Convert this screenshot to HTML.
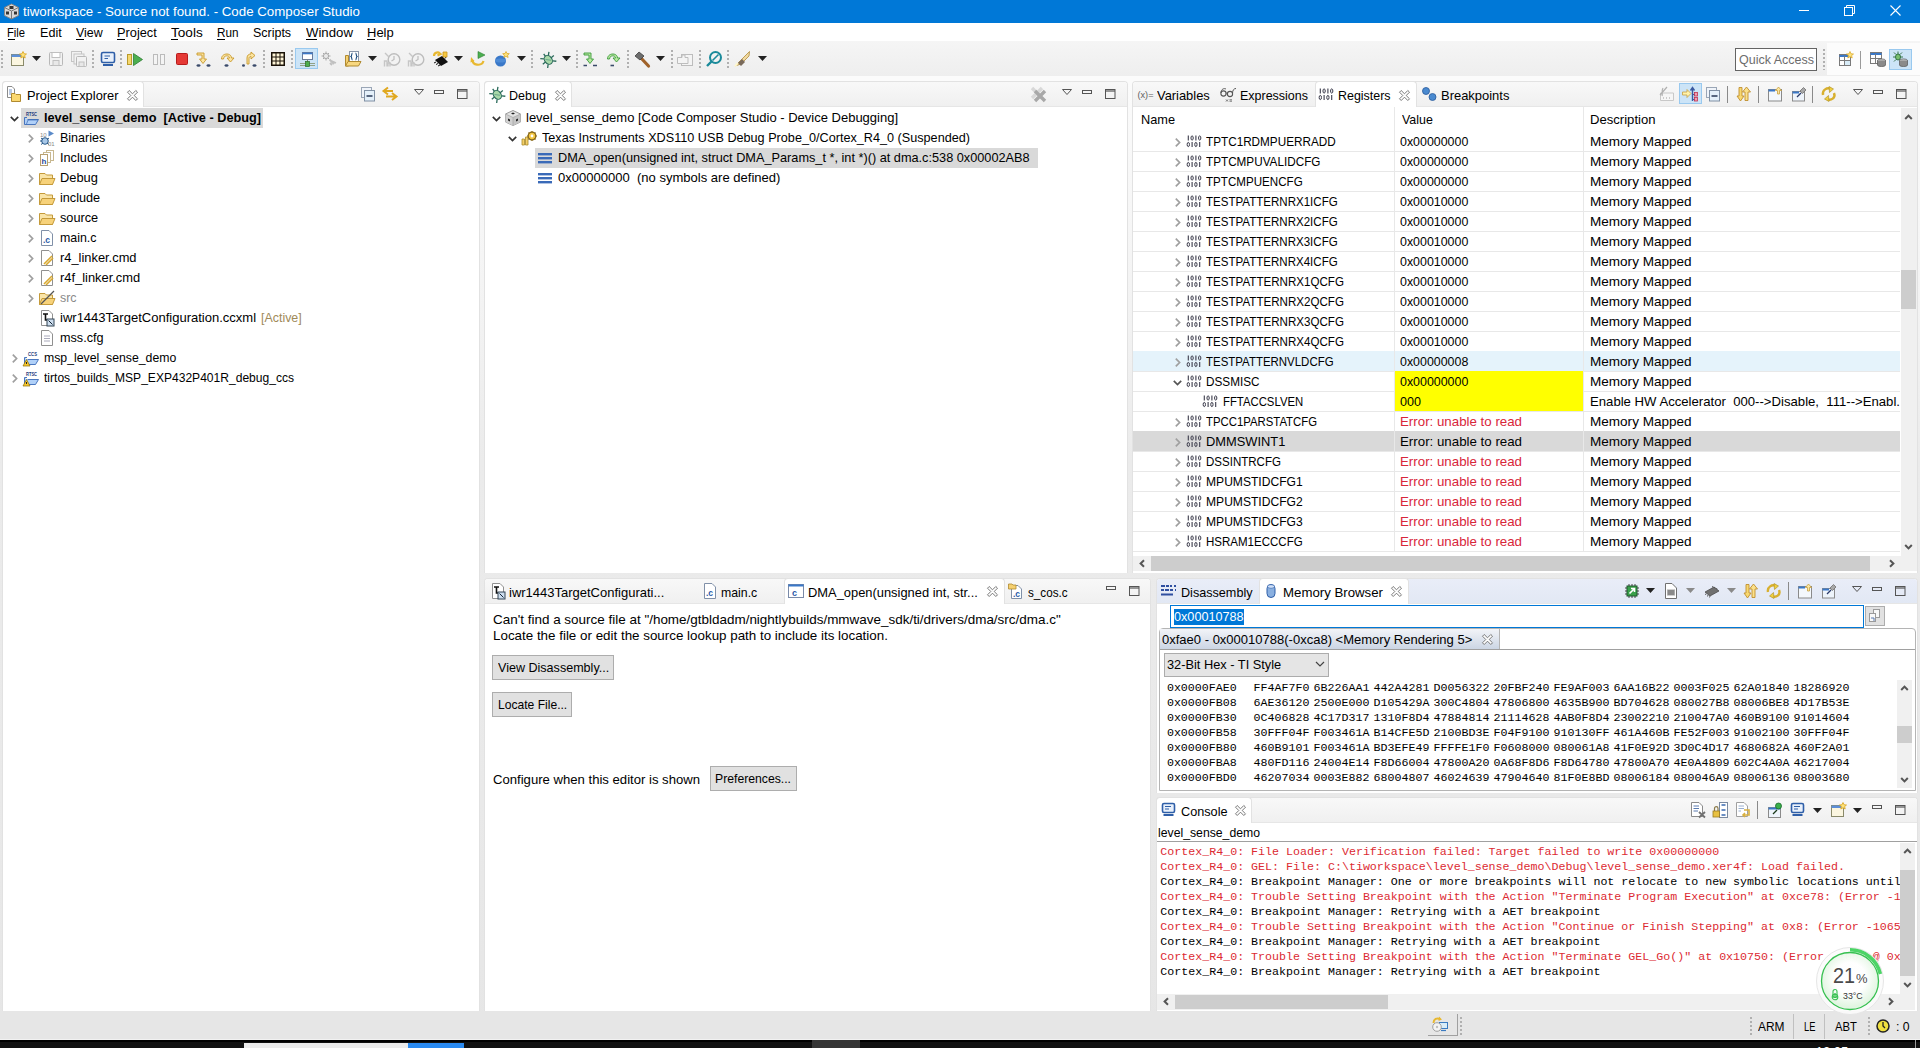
<!DOCTYPE html><html><head><meta charset="utf-8"><style>
*{margin:0;padding:0;box-sizing:border-box}
html,body{width:1920px;height:1048px;overflow:hidden;background:linear-gradient(to bottom,#fbfbfb 0px,#fbfbfb 81px,#f6f6f6 230px,#f2f2f2 330px,#ebebeb 460px,#e9e9e9 800px,#e6e6e6 1040px);font-family:"Liberation Sans",sans-serif;font-size:13px;color:#000}
.a{position:absolute}
.t{position:absolute;white-space:pre;line-height:15px;font-size:13px}
.m{position:absolute;white-space:pre;line-height:15px;font-family:"Liberation Mono",monospace;font-size:11.65px}
svg{position:absolute;overflow:visible}
</style></head><body><div class="a" style="left:0px;top:0px;width:1920px;height:23px;background:#0078d7;"></div>
<div class="t" style="left:22.9px;top:4.09px;font-size:13.33px;color:#fff;font-weight:normal;transform:scaleX(0.9974);transform-origin:0 0;">tiworkspace - Source not found. - Code Composer Studio</div>
<svg style="left:3px;top:3px" width="17" height="17" viewBox="0 0 17 17"><path d="M8.5 1 L15.5 4.5 L15.5 12.5 L8.5 16 L1.5 12.5 L1.5 4.5Z" fill="#d8d8d8" stroke="#888" stroke-width="1"/><path d="M1.5 4.5 L8.5 8 L15.5 4.5 M8.5 8 V16" stroke="#777" fill="none"/><rect x="6.5" y="3" width="4" height="3" fill="#333"/><rect x="3" y="8.5" width="3" height="3" fill="#333"/><rect x="11" y="8.5" width="3" height="3" fill="#333"/></svg>
<div class="a" style="left:1799px;top:10px;width:10px;height:1px;background:#fff;"></div>
<svg style="left:1844px;top:5px" width="11" height="11" viewBox="0 0 11 11"><rect x="0.5" y="2.5" width="8" height="8" fill="none" stroke="#fff"/><path d="M2.5 2.5 V0.5 H10.5 V8.5 H8.5" fill="none" stroke="#fff"/></svg>
<svg style="left:1890px;top:5px" width="11" height="11" viewBox="0 0 11 11"><path d="M0.5 0.5 L10.5 10.5 M10.5 0.5 L0.5 10.5" stroke="#fff" stroke-width="1.1"/></svg>
<div class="a" style="left:0px;top:23px;width:1920px;height:18px;background:#fff;"></div>
<div class="t" style="left:7.3px;top:25.20px;font-size:13px;color:#000;font-weight:normal;transform:scaleX(0.8641);transform-origin:0 0;">File</div>
<div class="t" style="left:40.2px;top:25.20px;font-size:13px;color:#000;font-weight:normal;transform:scaleX(0.9687);transform-origin:0 0;">Edit</div>
<div class="t" style="left:76px;top:25.20px;font-size:13px;color:#000;font-weight:normal;transform:scaleX(0.9555);transform-origin:0 0;">View</div>
<div class="t" style="left:117px;top:25.20px;font-size:13px;color:#000;font-weight:normal;transform:scaleX(0.9837);transform-origin:0 0;">Project</div>
<div class="t" style="left:170.8px;top:25.20px;font-size:13px;color:#000;font-weight:normal;transform:scaleX(1.0445);transform-origin:0 0;">Tools</div>
<div class="t" style="left:217px;top:25.20px;font-size:13px;color:#000;font-weight:normal;transform:scaleX(0.9015);transform-origin:0 0;">Run</div>
<div class="t" style="left:253px;top:25.20px;font-size:13px;color:#000;font-weight:normal;transform:scaleX(0.9590);transform-origin:0 0;">Scripts</div>
<div class="t" style="left:305.8px;top:25.20px;font-size:13px;color:#000;font-weight:normal;transform:scaleX(1.0143);transform-origin:0 0;">Window</div>
<div class="t" style="left:367px;top:25.20px;font-size:13px;color:#000;font-weight:normal;transform:scaleX(0.9986);transform-origin:0 0;">Help</div>
<div class="a" style="left:7.5px;top:39px;width:7px;height:1px;background:#000;"></div>
<div class="a" style="left:76px;top:39px;width:8px;height:1px;background:#000;"></div>
<div class="a" style="left:117px;top:39px;width:8px;height:1px;background:#000;"></div>
<div class="a" style="left:170.8px;top:39px;width:7px;height:1px;background:#000;"></div>
<div class="a" style="left:217px;top:39px;width:8px;height:1px;background:#000;"></div>
<div class="a" style="left:305.8px;top:39px;width:11px;height:1px;background:#000;"></div>
<div class="a" style="left:367px;top:39px;width:8px;height:1px;background:#000;"></div>
<div class="a" style="left:0px;top:41px;width:1920px;height:35px;background:linear-gradient(#f5f5f5,#eeeeee);"></div>
<div class="a" style="left:0px;top:76px;width:1920px;height:5px;background:#fbfbfb;"></div>
<div class="a" style="left:1px;top:50px;width:2px;height:18px;background:repeating-linear-gradient(to bottom,#b0b0b0 0 2px,transparent 2px 4px)"></div>
<div class="a" style="left:92px;top:50px;width:2px;height:18px;background:repeating-linear-gradient(to bottom,#b0b0b0 0 2px,transparent 2px 4px)"></div>
<div class="a" style="left:120px;top:50px;width:2px;height:18px;background:repeating-linear-gradient(to bottom,#b0b0b0 0 2px,transparent 2px 4px)"></div>
<div class="a" style="left:263px;top:50px;width:2px;height:18px;background:repeating-linear-gradient(to bottom,#b0b0b0 0 2px,transparent 2px 4px)"></div>
<div class="a" style="left:291px;top:50px;width:2px;height:18px;background:repeating-linear-gradient(to bottom,#b0b0b0 0 2px,transparent 2px 4px)"></div>
<div class="a" style="left:531px;top:50px;width:2px;height:18px;background:repeating-linear-gradient(to bottom,#b0b0b0 0 2px,transparent 2px 4px)"></div>
<div class="a" style="left:576px;top:50px;width:2px;height:18px;background:repeating-linear-gradient(to bottom,#b0b0b0 0 2px,transparent 2px 4px)"></div>
<div class="a" style="left:627px;top:50px;width:2px;height:18px;background:repeating-linear-gradient(to bottom,#b0b0b0 0 2px,transparent 2px 4px)"></div>
<div class="a" style="left:671px;top:50px;width:2px;height:18px;background:repeating-linear-gradient(to bottom,#b0b0b0 0 2px,transparent 2px 4px)"></div>
<div class="a" style="left:699px;top:50px;width:2px;height:18px;background:repeating-linear-gradient(to bottom,#b0b0b0 0 2px,transparent 2px 4px)"></div>
<div class="a" style="left:727px;top:50px;width:2px;height:18px;background:repeating-linear-gradient(to bottom,#b0b0b0 0 2px,transparent 2px 4px)"></div>
<svg style="left:10px;top:51px" width="16" height="16" viewBox="0 0 16 16"><rect x="1.5" y="3.5" width="12" height="11" fill="#fbf6e0" stroke="#8a8a6a"/><rect x="1.5" y="3.5" width="12" height="2.5" fill="#5d8fd8"/><path d="M13 0.5 L14.2 2.8 L16.5 3 L14.6 4.6 L15.2 7 L13 5.8 L10.8 7 L11.4 4.6 L9.5 3 L11.8 2.8Z" fill="#fde27a" stroke="#d9a21b" stroke-width="0.8"/></svg>
<svg style="left:32px;top:56px" width="9" height="5" viewBox="0 0 9 5"><path d="M0 0 H9 L4.5 5Z" fill="#222"/></svg>
<svg style="left:48px;top:51px" width="16" height="16" viewBox="0 0 16 16"><rect x="1.5" y="1.5" width="13" height="13" rx="1" fill="#f2f2f2" stroke="#b8b8b8"/><rect x="4" y="1.5" width="8" height="5" fill="#fff" stroke="#c0c0c0"/><rect x="5" y="9.5" width="6" height="5" fill="#e8e8e8" stroke="#c0c0c0"/></svg>
<svg style="left:71px;top:51px" width="16" height="16" viewBox="0 0 16 16"><rect x="0.5" y="0.5" width="10" height="10" fill="#f2f2f2" stroke="#c4c4c4"/><rect x="3" y="3" width="10" height="10" fill="#f2f2f2" stroke="#c4c4c4"/><rect x="5.5" y="5.5" width="10" height="10" rx="1" fill="#f2f2f2" stroke="#b8b8b8"/><rect x="8" y="11" width="5" height="4.5" fill="#e8e8e8" stroke="#c0c0c0"/></svg>
<svg style="left:100px;top:51px" width="16" height="16" viewBox="0 0 16 16"><rect x="1.5" y="1.5" width="13" height="10" rx="1.5" fill="#e8f0fb" stroke="#2f5fa8" stroke-width="1.6"/><path d="M4.5 5 H10 M4.5 7.5 H8" stroke="#2f5fa8" stroke-width="1.2"/><rect x="3" y="13" width="10" height="2" fill="#2f5fa8"/></svg>
<svg style="left:127px;top:51px" width="16" height="16" viewBox="0 0 16 16"><rect x="0.5" y="3.5" width="4" height="10" fill="#f5d76e" stroke="#b99a2a"/><path d="M6.5 2.5 L15.5 8.5 L6.5 14.5Z" fill="#4caf50" stroke="#2e7d32" stroke-width="0.8"/></svg>
<svg style="left:151px;top:51px" width="16" height="16" viewBox="0 0 16 16"><rect x="2.5" y="3.5" width="4" height="10" fill="#f4f4f4" stroke="#bbb"/><rect x="9.5" y="3.5" width="4" height="10" fill="#f4f4f4" stroke="#bbb"/></svg>
<svg style="left:174px;top:51px" width="16" height="16" viewBox="0 0 16 16"><rect x="2.5" y="2.5" width="11" height="11" rx="1" fill="#e53935" stroke="#b71c1c"/></svg>
<svg style="left:196px;top:51px" width="16" height="16" viewBox="0 0 16 16"><path d="M1 2 H8 V8 H10.5 L7 12.5 L3.5 8 H6 V4 H1Z" fill="#fbe4a0" stroke="#c8982a" stroke-width="0.9"/><ellipse cx="2.5" cy="14.5" rx="2" ry="1.2" fill="#3a4a6a"/><ellipse cx="12.5" cy="14.5" rx="2" ry="1.2" fill="#3a4a6a"/></svg>
<svg style="left:220px;top:51px" width="16" height="16" viewBox="0 0 16 16"><path d="M1.5 8 C1.5 1.5 11.5 1.5 11.5 7 H14 L10.5 11 L7 7 H9.5 C9.5 4 3.5 4 3.5 8Z" fill="#fbe4a0" stroke="#c8982a" stroke-width="0.9"/><ellipse cx="6.5" cy="14.5" rx="2" ry="1.2" fill="#3a4a6a"/></svg>
<svg style="left:242px;top:51px" width="16" height="16" viewBox="0 0 16 16"><path d="M5 13 V7 C5 4 7 3 9 3 V1 L13 4.5 L9 8 V5.5 C8 5.5 7 6 7 7.5 V13Z" fill="#fbe4a0" stroke="#c8982a" stroke-width="0.9"/><ellipse cx="1.5" cy="14.5" rx="1.5" ry="1.2" fill="#3a4a6a"/><ellipse cx="12.5" cy="14.5" rx="2" ry="1.2" fill="#3a4a6a"/></svg>
<svg style="left:270px;top:51px" width="16" height="16" viewBox="0 0 16 16"><rect x="1" y="1" width="14" height="14" fill="#1a1208"/><rect x="2.5" y="2.5" width="3" height="3" fill="#fff6d8"/><rect x="6.5" y="2.5" width="3" height="3" fill="#fff6d8"/><rect x="10.5" y="2.5" width="3" height="3" fill="#fff6d8"/><rect x="2.5" y="6.5" width="3" height="3" fill="#fff6d8"/><rect x="6.5" y="6.5" width="3" height="3" fill="#fff6d8"/><rect x="10.5" y="6.5" width="3" height="3" fill="#fff6d8"/><rect x="2.5" y="10.5" width="3" height="3" fill="#fff6d8"/><rect x="6.5" y="10.5" width="3" height="3" fill="#fff6d8"/><rect x="10.5" y="10.5" width="3" height="3" fill="#fff6d8"/></svg>
<svg style="left:295px;top:48px" width="23" height="21" viewBox="0 0 23 21"><rect x="0.5" y="0.5" width="22" height="20" fill="#cce4f7" stroke="#99c9ef"/></svg>
<svg style="left:299px;top:51px" width="16" height="16" viewBox="0 0 16 16"><rect x="3.5" y="1.5" width="10" height="7" fill="#fff" stroke="#6a7a9a"/><path d="M3.5 2.5 H13.5" stroke="#3a78c8" stroke-width="1.6"/><path d="M8.5 8.5 V11" stroke="#7a8a6a"/><path d="M1 12.5 H16 M1 14.5 H16" stroke="#8a9a7a" stroke-width="0.9"/><rect x="6.5" y="10.5" width="4" height="5" fill="#4cae4c" stroke="#2a6a2a" stroke-width="0.7"/></svg>
<svg style="left:321px;top:51px" width="16" height="16" viewBox="0 0 16 16"><circle cx="5" cy="5" r="2.6" fill="#e8e8e8" stroke="#a8a8a8"/><path d="M5 0.5 V2 M5 8 V9.5 M0.5 5 H2 M8 5 H9.5 M2 2 L3 3 M7 7 L8 8 M8 2 L7 3 M2 8 L3 7" stroke="#a8a8a8"/><path d="M8.5 8.5 L13 13 M10.5 10 L15 12 M11 14 L9 12" stroke="#c0c0c0" stroke-width="1.8"/></svg>
<svg style="left:345px;top:51px" width="16" height="16" viewBox="0 0 16 16"><rect x="4.5" y="0.5" width="9" height="10" fill="#fff" stroke="#8a96a8"/><path d="M7.5 2 C6.5 2 7 5 6 5.5 C7 6 6.5 9 7.5 9 M10.5 2 C11.5 2 11 5 12 5.5 C11 6 11.5 9 10.5 9" fill="none" stroke="#1a4a7a" stroke-width="1.1"/><path d="M0.5 4.5 H3.5 V15 H0.5Z" fill="#f5d070" stroke="#b08a30"/><path d="M0.5 15 L3 10.5 H16 L13.5 15Z" fill="#f8d880" stroke="#b08a30"/></svg>
<svg style="left:368px;top:56px" width="9" height="5" viewBox="0 0 9 5"><path d="M0 0 H9 L4.5 5Z" fill="#222"/></svg>
<svg style="left:384px;top:51px" width="16" height="16" viewBox="0 0 16 16"><circle cx="10" cy="8.5" r="5.8" fill="#f2f2f2" stroke="#bdbdbd" stroke-width="1.4"/><path d="M10 5 V8.5 L7.5 10" stroke="#bdbdbd" fill="none" stroke-width="1.2"/><path d="M1 2 L5 6 M0.5 15.5 V10 H3 V15.5 M4 15.5 V12 H6 V15.5" stroke="#c6c6c6" stroke-width="1.4" fill="none"/></svg>
<svg style="left:408px;top:51px" width="16" height="16" viewBox="0 0 16 16"><circle cx="10" cy="8.5" r="5.8" fill="#f2f2f2" stroke="#bdbdbd" stroke-width="1.4"/><path d="M10 5 V8.5 L7.5 10" stroke="#bdbdbd" fill="none" stroke-width="1.2"/><path d="M1 2 L5 6 M0.5 15.5 V10 H3 V15.5 M4 15.5 V12 H6 V15.5" stroke="#c6c6c6" stroke-width="1.4" fill="none"/></svg>
<svg style="left:432px;top:51px" width="16" height="16" viewBox="0 0 16 16"><path d="M3 9 L10 5 L16 11 L9 15Z" fill="#111"/><path d="M4 11 L2 12 M6 12.5 L4 13.5 M8 14 L6 15 M11 5.5 L12 4 M13 7.5 L14 6" stroke="#111"/><path d="M2 5 C2 1 7 0.5 8 3 M6 1 L8.5 3 L5.5 4.5" fill="none" stroke="#e8b830" stroke-width="2.2"/><path d="M11 1 H15 V6 H11Z" fill="#f5c842" stroke="#c9961f" stroke-width="0.8"/></svg>
<svg style="left:454px;top:56px" width="9" height="5" viewBox="0 0 9 5"><path d="M0 0 H9 L4.5 5Z" fill="#222"/></svg>
<svg style="left:470px;top:51px" width="16" height="16" viewBox="0 0 16 16"><path d="M8 0.5 L15 4 L8 7.5Z" fill="#4caf50" stroke="#2e7d32" stroke-width="0.6"/><path d="M3 9 C1 14 12 16 13.5 10" fill="none" stroke="#e8b830" stroke-width="2.2"/><path d="M1 6 L4.5 10 L0.5 11.5Z" fill="#e8b830"/></svg>
<svg style="left:494px;top:51px" width="16" height="16" viewBox="0 0 16 16"><circle cx="6.5" cy="10" r="5.5" fill="#3a78c8"/><ellipse cx="6.5" cy="9.5" rx="5.3" ry="2" fill="#5a98e0" opacity="0.6"/><path d="M12 0.5 L13 2.5 L15.3 2.7 L13.6 4.2 L14.1 6.5 L12 5.3 L9.9 6.5 L10.4 4.2 L8.7 2.7 L11 2.5Z" fill="#fde27a" stroke="#d9a21b" stroke-width="0.7"/></svg>
<svg style="left:517px;top:56px" width="9" height="5" viewBox="0 0 9 5"><path d="M0 0 H9 L4.5 5Z" fill="#222"/></svg>
<svg style="left:540px;top:51px" width="16" height="16" viewBox="0 0 16 16"><g transform="rotate(-38 8 8.5)"><ellipse cx="8" cy="9" rx="3.6" ry="4.8" fill="#a8d8a8" stroke="#2a6a5a" stroke-width="1.1"/><path d="M6 7 L10 11" stroke="#6aa88a" stroke-width="1"/><path d="M8 4.2 V1.5 M5.2 5.5 L2.5 3 M10.8 5.5 L13.5 3 M4.4 9 H1 M11.6 9 H15 M5 12.5 L2.5 15 M11 12.5 L13.5 15" stroke="#2a6a5a" stroke-width="1.3"/></g></svg>
<svg style="left:562px;top:56px" width="9" height="5" viewBox="0 0 9 5"><path d="M0 0 H9 L4.5 5Z" fill="#222"/></svg>
<svg style="left:583px;top:51px" width="16" height="16" viewBox="0 0 16 16"><path d="M1 2 H8 V8 H10.5 L7 12.5 L3.5 8 H6 V4 H1Z" fill="#b8e8a0" stroke="#3a9a3a" stroke-width="0.9"/><path d="M0.5 14.5 H4 M10 14.5 H14" stroke="#3a4a6a" stroke-width="1.6"/></svg>
<svg style="left:606px;top:51px" width="16" height="16" viewBox="0 0 16 16"><path d="M1.5 8 C1.5 1.5 11.5 1.5 11.5 7 H14 L10.5 11 L7 7 H9.5 C9.5 4 3.5 4 3.5 8Z" fill="#b8e8a0" stroke="#3a9a3a" stroke-width="0.9"/><path d="M4.5 14.5 H8" stroke="#3a4a6a" stroke-width="1.6"/></svg>
<svg style="left:634px;top:51px" width="16" height="16" viewBox="0 0 16 16"><path d="M7 7 L14.5 15" stroke="#a0622a" stroke-width="3.2" stroke-linecap="round"/><path d="M1 5 L5 1 L10 5 L6 9Z" fill="#6d6d6d" stroke="#3d3d3d" stroke-width="0.8"/></svg>
<svg style="left:656px;top:56px" width="9" height="5" viewBox="0 0 9 5"><path d="M0 0 H9 L4.5 5Z" fill="#222"/></svg>
<svg style="left:677px;top:51px" width="16" height="16" viewBox="0 0 16 16"><rect x="4.5" y="3.5" width="11" height="11" fill="#f4f4f4" stroke="#bdbdbd"/><path d="M0.5 6.5 H5 V4 H8 V6.5 H11 V12.5 H0.5Z" fill="#f4f4f4" stroke="#bdbdbd"/></svg>
<svg style="left:706px;top:51px" width="16" height="16" viewBox="0 0 16 16"><circle cx="9.5" cy="6.5" r="5.5" fill="none" stroke="#1a8a9a" stroke-width="2"/><path d="M5.5 10.5 L1 15" stroke="#1a8a9a" stroke-width="2.4"/><path d="M6.5 9.5 L12.5 3.5" stroke="#1a8a9a" stroke-width="1.6"/></svg>
<svg style="left:734px;top:51px" width="16" height="16" viewBox="0 0 16 16"><path d="M1 15 L5 11 L13 3 L15.5 0.5 L15 5 L7 13Z" fill="#f0d9a0" stroke="#b08a3a" stroke-width="0.8"/><path d="M4 12 L8 8 L11 11 L7 15Z" fill="#7a6a5a"/><path d="M1 15.5 L3.5 12" stroke="#fff8d0" stroke-width="2"/></svg>
<svg style="left:758px;top:56px" width="9" height="5" viewBox="0 0 9 5"><path d="M0 0 H9 L4.5 5Z" fill="#222"/></svg>
<div class="a" style="left:1735px;top:48px;width:82px;height:23px;background:#fff;border:1px solid #646464"></div>
<div class="t" style="left:1738.5px;top:52.20px;font-size:13px;color:#6d6d6d;font-weight:normal;transform:scaleX(0.9612);transform-origin:0 0;">Quick Access</div>
<div class="a" style="left:1823px;top:49px;width:2px;height:21px;background:repeating-linear-gradient(to bottom,#b0b0b0 0 2px,transparent 2px 4px)"></div>
<div class="a" style="left:1827px;top:43px;width:93px;height:32px;background:#fcfcfc;"></div>
<svg style="left:1838px;top:51px" width="16" height="16" viewBox="0 0 16 16"><rect x="1.5" y="3.5" width="11" height="11" fill="#fff" stroke="#7a7a7a"/><path d="M1.5 5 H12.5" stroke="#3a78c8" stroke-width="2"/><path d="M1.5 9.5 H12.5 M6.5 5 V14.5" stroke="#7a7a7a"/><rect x="7" y="10" width="5" height="4" fill="#d8ecf8"/><path d="M12 0.5 L13 2.8 L15.5 3 L13.6 4.6 L14.2 7 L12 5.7 L9.8 7 L10.4 4.6 L8.5 3 L11 2.8Z" fill="#fde27a" stroke="#d9a21b" stroke-width="0.7"/></svg>
<div class="a" style="left:1860px;top:51px;width:1px;height:18px;background:#9a9a9a;"></div>
<svg style="left:1870px;top:51px" width="16" height="16" viewBox="0 0 16 16"><rect x="0.5" y="1.5" width="11" height="11" fill="#fff" stroke="#7a7a7a"/><path d="M0.5 3 H11.5" stroke="#3a78c8" stroke-width="2"/><path d="M0.5 7.5 H11.5 M5.5 3 V12.5" stroke="#7a7a7a"/><ellipse cx="11.5" cy="9.5" rx="4" ry="1.6" fill="#c8c8c8" stroke="#555" stroke-width="0.7"/><path d="M7.5 9.5 V14 C7.5 16 15.5 16 15.5 14 V9.5" fill="#8a8a8a" stroke="#555" stroke-width="0.7"/></svg>
<svg style="left:1889px;top:49px" width="23" height="21" viewBox="0 0 23 21"><rect x="0.5" y="0.5" width="22" height="20" fill="#cce4f7" stroke="#99c9ef"/></svg>
<svg style="left:1892px;top:51px" width="16" height="16" viewBox="0 0 16 16"><ellipse cx="6" cy="6" rx="2.5" ry="3" fill="#7ac070" stroke="#2a6a3a" stroke-width="0.9"/><path d="M6 3 V0.5 M4 3.5 L2 1.5 M8 3.5 L10 1.5 M3.5 6 H1 M8.5 6 H11 M4 8.5 L2 10.5 M8 8.5 L10 10.5" stroke="#2a6a3a" stroke-width="0.9"/><ellipse cx="11.5" cy="9.5" rx="4" ry="1.6" fill="#c8c8c8" stroke="#555" stroke-width="0.7"/><path d="M7.5 9.5 V14 C7.5 16 15.5 16 15.5 14 V9.5" fill="#8a8a8a" stroke="#555" stroke-width="0.7"/></svg>
<div class="a" style="left:2px;top:81px;width:478px;height:930px;background:#fff;border:1px solid #e2e2e2;border-radius:4px 4px 0 0;border-bottom:none"></div>
<div class="a" style="left:3px;top:82px;width:476px;height:24px;background:linear-gradient(#f8f8f8,#f0f0f0);border-radius:3px 3px 0 0"></div>
<div class="a" style="left:3px;top:106px;width:476px;height:1px;background:#e6e6e6;"></div>
<div class="a" style="left:2px;top:81px;width:142px;height:26px;background:#fff;border:1px solid #e2e2e2;border-bottom:none;border-radius:4px 4px 0 0"></div>
<svg style="left:6px;top:86px" width="16" height="16" viewBox="0 0 16 16"><path d="M1.5 0.5 H6 L8.5 3 V11.5 H1.5Z" fill="#fff" stroke="#8a8a8a"/><path d="M3 4 H6 M3 6 H6 M3 8 H5" stroke="#6a8ac0" stroke-width="0.9"/><path d="M5.5 7.5 H9 L10 8.5 H14.5 V15.5 H5.5Z" fill="#fbd870" stroke="#b08a30"/></svg>
<div class="t" style="left:27.25px;top:88.20px;font-size:13px;color:#000;font-weight:normal;transform:scaleX(0.9894);transform-origin:0 0;">Project Explorer</div>
<svg style="left:127px;top:90px" width="11" height="11" viewBox="0 0 11 11"><path d="M0.5 2.2 L2.2 0.5 L5.5 3.8 L8.8 0.5 L10.5 2.2 L7.2 5.5 L10.5 8.8 L8.8 10.5 L5.5 7.2 L2.2 10.5 L0.5 8.8 L3.8 5.5Z" fill="#fff" stroke="#6a6a6a" stroke-width="0.9" stroke-linejoin="round"/></svg>
<svg style="left:360px;top:86px" width="16" height="16" viewBox="0 0 16 16"><rect x="1.5" y="1.5" width="10" height="10" fill="#f0f4fa" stroke="#9aa6b6"/><rect x="4.5" y="4.5" width="10" height="10.5" fill="#e4f0fa" stroke="#8090a4"/><path d="M6.5 10 H12.5" stroke="#1a2a4a" stroke-width="1.4"/></svg>
<svg style="left:382px;top:86px" width="16" height="16" viewBox="0 0 16 16"><path d="M6 1.5 L1.5 5 L6 8.5 M1.5 5 H11" fill="none" stroke="#e0a820" stroke-width="2"/><path d="M10 7 L14.5 10.5 L10 14 M14.5 10.5 H4" fill="none" stroke="#e0a820" stroke-width="2"/></svg>
<svg style="left:414px;top:89px" width="10" height="6" viewBox="0 0 10 6"><path d="M0.5 0.5 H9.5 L5 5.5Z" fill="none" stroke="#555" stroke-width="1"/></svg>
<svg style="left:434px;top:90px" width="10" height="4" viewBox="0 0 10 4"><rect x="0.5" y="0.5" width="9" height="3" fill="none" stroke="#555" stroke-width="1"/></svg>
<svg style="left:457px;top:89px" width="11" height="10" viewBox="0 0 11 10"><rect x="0.5" y="0.5" width="9.5" height="9" fill="none" stroke="#555" stroke-width="1"/><path d="M0.5 2 H10" stroke="#555" stroke-width="1.2"/></svg>
<div class="a" style="left:21px;top:108px;width:242px;height:20px;background:#d9d9d9;"></div>
<svg style="left:10.0px;top:115.5px" width="9" height="6" viewBox="0 0 9 6"><path d="M0.8 0.8 L4.5 4.5 L8.2 0.8" fill="none" stroke="#333" stroke-width="1.7"/></svg>
<svg style="left:23px;top:110px" width="16" height="16" viewBox="0 0 16 16"><text x="3" y="5.8" font-size="6" font-family="Liberation Sans" font-weight="bold" fill="#1a3a7a" textLength="11" lengthAdjust="spacingAndGlyphs">RTSC</text><path d="M1.5 7.5 V14.5 H12.5 L15.5 9.5 H4.5" fill="#b0d0f8" stroke="#3a6ab8" stroke-width="0.9"/><path d="M1.5 7.5 H4" stroke="#3a6ab8" stroke-width="0.9"/><path d="M3.5 14 L5 10 H15" fill="none" stroke="#3a6ab8" stroke-width="0.7"/></svg>
<div class="t" style="left:44.4px;top:110.20px;font-size:13px;color:#000;font-weight:bold;transform:scaleX(0.9784);transform-origin:0 0;">level_sense_demo  [Active - Debug]</div>
<svg style="left:28.0px;top:133.5px" width="6" height="9" viewBox="0 0 6 9"><path d="M0.8 0.6 L4.6 4.5 L0.8 8.4" fill="none" stroke="#a0a0a0" stroke-width="1.7"/></svg>
<svg style="left:39px;top:130px" width="16" height="16" viewBox="0 0 16 16"><text x="1" y="6.5" font-size="6" font-family="Liberation Sans" fill="#888">10</text><path d="M9.5 0.5 L15 3.5 L9.5 6.5Z" fill="#5a8ac8"/><circle cx="6" cy="11" r="3.3" fill="#a8c8e8" stroke="#2a5a8a"/><path d="M2 8 L4 9.5 M1 11 H3 M2 14.5 L4 13 M10 8 L8 9.5 M10 14.5 L8 13" stroke="#2a5a8a"/><text x="9" y="15.5" font-size="6" font-family="Liberation Sans" fill="#888">01</text></svg>
<div class="t" style="left:60.4px;top:130.20px;font-size:13px;color:#000;font-weight:normal;transform:scaleX(0.9624);transform-origin:0 0;">Binaries</div>
<svg style="left:28.0px;top:153.5px" width="6" height="9" viewBox="0 0 6 9"><path d="M0.8 0.6 L4.6 4.5 L0.8 8.4" fill="none" stroke="#a0a0a0" stroke-width="1.7"/></svg>
<svg style="left:39px;top:150px" width="16" height="16" viewBox="0 0 16 16"><rect x="7.5" y="0.5" width="7" height="10" fill="#fff" stroke="#c8b890"/><rect x="4.5" y="2.5" width="7" height="10" fill="#fff" stroke="#c8b890"/><rect x="1.5" y="4.5" width="7" height="11" fill="#fff" stroke="#b8a070"/><text x="2.5" y="14" font-size="8" font-family="Liberation Sans" font-weight="bold" fill="#2a4a9a">h</text></svg>
<div class="t" style="left:60.4px;top:150.20px;font-size:13px;color:#000;font-weight:normal;transform:scaleX(0.9789);transform-origin:0 0;">Includes</div>
<svg style="left:28.0px;top:173.5px" width="6" height="9" viewBox="0 0 6 9"><path d="M0.8 0.6 L4.6 4.5 L0.8 8.4" fill="none" stroke="#a0a0a0" stroke-width="1.7"/></svg>
<svg style="left:39px;top:170px" width="16" height="16" viewBox="0 0 16 16"><path d="M0.5 3.5 H6 L7.5 5 H13.5 V14.5 H0.5Z" fill="#f9e4a8" stroke="#c49a3a"/><path d="M0.5 14.5 L3 8.5 H16 L13.5 14.5Z" fill="#f7d27a" stroke="#c49a3a"/></svg>
<div class="t" style="left:60.4px;top:170.20px;font-size:13px;color:#000;font-weight:normal;transform:scaleX(0.9893);transform-origin:0 0;">Debug</div>
<svg style="left:28.0px;top:193.5px" width="6" height="9" viewBox="0 0 6 9"><path d="M0.8 0.6 L4.6 4.5 L0.8 8.4" fill="none" stroke="#a0a0a0" stroke-width="1.7"/></svg>
<svg style="left:39px;top:190px" width="16" height="16" viewBox="0 0 16 16"><path d="M0.5 3.5 H6 L7.5 5 H13.5 V14.5 H0.5Z" fill="#f9e4a8" stroke="#c49a3a"/><path d="M0.5 14.5 L3 8.5 H16 L13.5 14.5Z" fill="#f7d27a" stroke="#c49a3a"/></svg>
<div class="t" style="left:60.4px;top:190.20px;font-size:13px;color:#000;font-weight:normal;transform:scaleX(0.9734);transform-origin:0 0;">include</div>
<svg style="left:28.0px;top:213.5px" width="6" height="9" viewBox="0 0 6 9"><path d="M0.8 0.6 L4.6 4.5 L0.8 8.4" fill="none" stroke="#a0a0a0" stroke-width="1.7"/></svg>
<svg style="left:39px;top:210px" width="16" height="16" viewBox="0 0 16 16"><path d="M0.5 3.5 H6 L7.5 5 H13.5 V14.5 H0.5Z" fill="#f9e4a8" stroke="#c49a3a"/><path d="M0.5 14.5 L3 8.5 H16 L13.5 14.5Z" fill="#f7d27a" stroke="#c49a3a"/></svg>
<div class="t" style="left:60.4px;top:210.20px;font-size:13px;color:#000;font-weight:normal;transform:scaleX(0.9790);transform-origin:0 0;">source</div>
<svg style="left:28.0px;top:233.5px" width="6" height="9" viewBox="0 0 6 9"><path d="M0.8 0.6 L4.6 4.5 L0.8 8.4" fill="none" stroke="#a0a0a0" stroke-width="1.7"/></svg>
<svg style="left:39px;top:230px" width="16" height="16" viewBox="0 0 16 16"><path d="M2.5 0.5 H10 L13.5 4 V15.5 H2.5Z" fill="#fff" stroke="#8090a8"/><text x="4" y="12.5" font-size="8.5" font-family="Liberation Sans" font-weight="bold" fill="#2a5aa8">.c</text></svg>
<div class="t" style="left:60.4px;top:230.20px;font-size:13px;color:#000;font-weight:normal;transform:scaleX(0.9533);transform-origin:0 0;">main.c</div>
<svg style="left:28.0px;top:253.5px" width="6" height="9" viewBox="0 0 6 9"><path d="M0.8 0.6 L4.6 4.5 L0.8 8.4" fill="none" stroke="#a0a0a0" stroke-width="1.7"/></svg>
<svg style="left:39px;top:250px" width="16" height="16" viewBox="0 0 16 16"><path d="M2.5 0.5 H10 L13.5 4 V15.5 H2.5Z" fill="#fff" stroke="#909090"/><path d="M5 14 L13 6 M7 15 L14 8" stroke="#d8a830" stroke-width="1.6"/></svg>
<div class="t" style="left:60.4px;top:250.20px;font-size:13px;color:#000;font-weight:normal;transform:scaleX(0.9895);transform-origin:0 0;">r4_linker.cmd</div>
<svg style="left:28.0px;top:273.5px" width="6" height="9" viewBox="0 0 6 9"><path d="M0.8 0.6 L4.6 4.5 L0.8 8.4" fill="none" stroke="#a0a0a0" stroke-width="1.7"/></svg>
<svg style="left:39px;top:270px" width="16" height="16" viewBox="0 0 16 16"><path d="M2.5 0.5 H10 L13.5 4 V15.5 H2.5Z" fill="#fff" stroke="#909090"/><path d="M5 14 L13 6 M7 15 L14 8" stroke="#d8a830" stroke-width="1.6"/></svg>
<div class="t" style="left:60.4px;top:270.20px;font-size:13px;color:#000;font-weight:normal;transform:scaleX(0.9911);transform-origin:0 0;">r4f_linker.cmd</div>
<svg style="left:28.0px;top:293.5px" width="6" height="9" viewBox="0 0 6 9"><path d="M0.8 0.6 L4.6 4.5 L0.8 8.4" fill="none" stroke="#a0a0a0" stroke-width="1.7"/></svg>
<svg style="left:39px;top:290px" width="16" height="16" viewBox="0 0 16 16"><path d="M0.5 3.5 H6 L7.5 5 H13.5 V14.5 H0.5Z" fill="#f9e4a8" stroke="#c49a3a"/><path d="M0.5 14.5 L3 8.5 H16 L13.5 14.5Z" fill="#f7d27a" stroke="#c49a3a"/><path d="M2 14 L15 1" stroke="#555" stroke-width="1.2"/></svg>
<div class="t" style="left:60.4px;top:290.20px;font-size:13px;color:#8a8a8a;font-weight:normal;transform:scaleX(0.9579);transform-origin:0 0;">src</div>
<svg style="left:39px;top:310px" width="16" height="16" viewBox="0 0 16 16"><path d="M2.5 0.5 H10 L13.5 4 V15.5 H2.5Z" fill="#fff" stroke="#909090"/><path d="M4 4 H9 M6.5 4 V10 H10 V13" stroke="#111" stroke-width="1.6" fill="none"/><rect x="8" y="9" width="7" height="7" fill="#cde" stroke="#345"/><path d="M9.5 10.5 L13.5 14.5" stroke="#123"/></svg>
<div class="t" style="left:60.4px;top:310.20px;font-size:13px;color:#000;font-weight:normal;transform:scaleX(1.0015);transform-origin:0 0;">iwr1443TargetConfiguration.ccxml</div>
<div class="t" style="left:261.4px;top:310.20px;font-size:13px;color:#a08a5a;font-weight:normal;transform:scaleX(0.9548);transform-origin:0 0;">[Active]</div>
<svg style="left:39px;top:330px" width="16" height="16" viewBox="0 0 16 16"><path d="M2.5 0.5 H10 L13.5 4 V15.5 H2.5Z" fill="#fff" stroke="#909090"/><path d="M5 6 H11 M5 8.5 H11 M5 11 H11" stroke="#aab" stroke-width="1"/></svg>
<div class="t" style="left:60.4px;top:330.20px;font-size:13px;color:#000;font-weight:normal;transform:scaleX(0.9714);transform-origin:0 0;">mss.cfg</div>
<svg style="left:12.0px;top:353.5px" width="6" height="9" viewBox="0 0 6 9"><path d="M0.8 0.6 L4.6 4.5 L0.8 8.4" fill="none" stroke="#a0a0a0" stroke-width="1.7"/></svg>
<svg style="left:23px;top:350px" width="16" height="16" viewBox="0 0 16 16"><text x="5" y="5.8" font-size="6" font-family="Liberation Sans" font-weight="bold" fill="#1a3a7a" textLength="9" lengthAdjust="spacingAndGlyphs">CCS</text><path d="M1.5 7.5 V14.5 H12.5 L15.5 9.5 H4.5" fill="#b0d0f8" stroke="#3a6ab8" stroke-width="0.9"/><path d="M1.5 7.5 H4" stroke="#3a6ab8" stroke-width="0.9"/><path d="M0 16 L3.5 9.5 L7 16Z" fill="#f8c830" stroke="#8a6a00" stroke-width="0.7"/><path d="M3.5 12 V14" stroke="#222" stroke-width="1"/></svg>
<div class="t" style="left:44.4px;top:350.20px;font-size:13px;color:#000;font-weight:normal;transform:scaleX(0.9437);transform-origin:0 0;">msp_level_sense_demo</div>
<svg style="left:12.0px;top:373.5px" width="6" height="9" viewBox="0 0 6 9"><path d="M0.8 0.6 L4.6 4.5 L0.8 8.4" fill="none" stroke="#a0a0a0" stroke-width="1.7"/></svg>
<svg style="left:23px;top:370px" width="16" height="16" viewBox="0 0 16 16"><text x="3" y="5.8" font-size="6" font-family="Liberation Sans" font-weight="bold" fill="#1a3a7a" textLength="11" lengthAdjust="spacingAndGlyphs">RTSC</text><path d="M1.5 7.5 V14.5 H12.5 L15.5 9.5 H4.5" fill="#b0d0f8" stroke="#3a6ab8" stroke-width="0.9"/><path d="M1.5 7.5 H4" stroke="#3a6ab8" stroke-width="0.9"/><path d="M0 16 L3.5 9.5 L7 16Z" fill="#f8c830" stroke="#8a6a00" stroke-width="0.7"/><path d="M3.5 12 V14" stroke="#222" stroke-width="1"/></svg>
<div class="t" style="left:44.4px;top:370.20px;font-size:13px;color:#000;font-weight:normal;transform:scaleX(0.9274);transform-origin:0 0;">tirtos_builds_MSP_EXP432P401R_debug_ccs</div>
<div class="a" style="left:484px;top:81px;width:644px;height:492px;background:#fff;border:1px solid #e2e2e2;border-radius:4px 4px 0 0;border-bottom:none"></div>
<div class="a" style="left:485px;top:82px;width:642px;height:24px;background:linear-gradient(#f8f8f8,#f0f0f0);border-radius:3px 3px 0 0"></div>
<div class="a" style="left:485px;top:106px;width:642px;height:1px;background:#e6e6e6;"></div>
<div class="a" style="left:484px;top:81px;width:88px;height:26px;background:#fff;border:1px solid #e2e2e2;border-bottom:none;border-radius:4px 4px 0 0"></div>
<svg style="left:489px;top:86px" width="16" height="16" viewBox="0 0 16 16"><g transform="rotate(-38 8 8.5)"><ellipse cx="8" cy="9" rx="3.6" ry="4.8" fill="#a8d8a8" stroke="#2a6a5a" stroke-width="1.1"/><path d="M6 7 L10 11" stroke="#6aa88a" stroke-width="1"/><path d="M8 4.2 V1.5 M5.2 5.5 L2.5 3 M10.8 5.5 L13.5 3 M4.4 9 H1 M11.6 9 H15 M5 12.5 L2.5 15 M11 12.5 L13.5 15" stroke="#2a6a5a" stroke-width="1.3"/></g></svg>
<div class="t" style="left:509.4px;top:88.20px;font-size:13px;color:#000;font-weight:normal;transform:scaleX(0.9619);transform-origin:0 0;">Debug</div>
<svg style="left:555px;top:90px" width="11" height="11" viewBox="0 0 11 11"><path d="M0.5 2.2 L2.2 0.5 L5.5 3.8 L8.8 0.5 L10.5 2.2 L7.2 5.5 L10.5 8.8 L8.8 10.5 L5.5 7.2 L2.2 10.5 L0.5 8.8 L3.8 5.5Z" fill="#fff" stroke="#6a6a6a" stroke-width="0.9" stroke-linejoin="round"/></svg>
<svg style="left:1030px;top:86px" width="16" height="16" viewBox="0 0 16 16"><path d="M2 2 L12 12 M12 2 L2 12" stroke="#d8d8d8" stroke-width="3.4"/><path d="M5 5 L15 15 M15 5 L5 15" stroke="#a8a8a8" stroke-width="3.4"/></svg>
<svg style="left:1062px;top:89px" width="10" height="6" viewBox="0 0 10 6"><path d="M0.5 0.5 H9.5 L5 5.5Z" fill="none" stroke="#555" stroke-width="1"/></svg>
<svg style="left:1082px;top:90px" width="10" height="4" viewBox="0 0 10 4"><rect x="0.5" y="0.5" width="9" height="3" fill="none" stroke="#555" stroke-width="1"/></svg>
<svg style="left:1105px;top:89px" width="11" height="10" viewBox="0 0 11 10"><rect x="0.5" y="0.5" width="9.5" height="9" fill="none" stroke="#555" stroke-width="1"/><path d="M0.5 2 H10" stroke="#555" stroke-width="1.2"/></svg>
<svg style="left:491.5px;top:115.5px" width="9" height="6" viewBox="0 0 9 6"><path d="M0.8 0.8 L4.5 4.5 L8.2 0.8" fill="none" stroke="#333" stroke-width="1.7"/></svg>
<svg style="left:505px;top:110px" width="16" height="16" viewBox="0 0 16 16"><path d="M8 0.5 L15.5 4 L15.5 12 L8 15.5 L0.5 12 L0.5 4Z" fill="#e4e4e4" stroke="#9a9a9a"/><path d="M0.5 4 L8 7.5 V15.5 L0.5 12Z" fill="#d0d0d0"/><path d="M15.5 4 L8 7.5 V15.5 L15.5 12Z" fill="#c4c4c4"/><path d="M0.5 4 L8 7.5 L15.5 4 M8 7.5 V15.5" stroke="#a8a8a8" fill="none" stroke-width="0.8"/><path d="M6 3.5 L8 2.5 L10 3.5 L8 4.5Z" fill="#222"/><path d="M3 8.5 L5 9.5 V11.5 L3 10.5Z" fill="#222"/><path d="M11 9.5 L13 8.5 V10.5 L11 11.5Z" fill="#222"/></svg>
<div class="t" style="left:525.7px;top:110.20px;font-size:13px;color:#000;font-weight:normal;transform:scaleX(0.9996);transform-origin:0 0;">level_sense_demo [Code Composer Studio - Device Debugging]</div>
<svg style="left:508.0px;top:135.5px" width="9" height="6" viewBox="0 0 9 6"><path d="M0.8 0.8 L4.5 4.5 L8.2 0.8" fill="none" stroke="#333" stroke-width="1.7"/></svg>
<svg style="left:521px;top:130px" width="16" height="16" viewBox="0 0 16 16"><path d="M1 9 H3.5 V15 H1Z M4.5 7 H7 V15 H4.5Z" fill="#f5d06a" stroke="#a88a2a" stroke-width="0.8"/><circle cx="11" cy="6" r="3.8" fill="#f5c842" stroke="#8a6a1a" stroke-width="1.3"/><circle cx="11" cy="6" r="1.4" fill="#fff"/><path d="M11 1 V2.5 M11 9.5 V11 M6 6 H7.5 M14.5 6 H16 M7.5 2.5 L8.5 3.5 M13.5 8.5 L14.5 9.5 M14.5 2.5 L13.5 3.5 M7.5 9.5 L8.5 8.5" stroke="#8a6a1a" stroke-width="1.2"/></svg>
<div class="t" style="left:541.9px;top:130.20px;font-size:13px;color:#000;font-weight:normal;transform:scaleX(0.9731);transform-origin:0 0;">Texas Instruments XDS110 USB Debug Probe_0/Cortex_R4_0 (Suspended)</div>
<div class="a" style="left:535px;top:148px;width:503px;height:20px;background:#d9d9d9;"></div>
<svg style="left:537px;top:150px" width="16" height="16" viewBox="0 0 16 16"><rect x="1" y="3" width="14" height="2.4" fill="#3a6ab8"/><rect x="1" y="7" width="14" height="2.4" fill="#3a6ab8"/><rect x="1" y="11" width="14" height="2.4" fill="#3a6ab8"/></svg>
<div class="t" style="left:558.4px;top:150.20px;font-size:13px;color:#000;font-weight:normal;transform:scaleX(0.9785);transform-origin:0 0;">DMA_open(unsigned int, struct DMA_Params_t *, int *)() at dma.c:538 0x00002AB8</div>
<svg style="left:537px;top:170px" width="16" height="16" viewBox="0 0 16 16"><rect x="1" y="3" width="14" height="2.4" fill="#3a6ab8"/><rect x="1" y="7" width="14" height="2.4" fill="#3a6ab8"/><rect x="1" y="11" width="14" height="2.4" fill="#3a6ab8"/></svg>
<div class="t" style="left:558.4px;top:170.20px;font-size:13px;color:#000;font-weight:normal;transform:scaleX(1.0024);transform-origin:0 0;">0x00000000  (no symbols are defined)</div>
<div class="a" style="left:1132px;top:81px;width:786px;height:492px;background:#fff;border:1px solid #e2e2e2;border-radius:4px 4px 0 0;border-bottom:none"></div>
<div class="a" style="left:1133px;top:82px;width:784px;height:24px;background:linear-gradient(#f8f8f8,#f0f0f0);border-radius:3px 3px 0 0"></div>
<div class="a" style="left:1133px;top:106px;width:784px;height:1px;background:#e6e6e6;"></div>
<div class="a" style="left:1315px;top:81px;width:102px;height:26px;background:#fff;border:1px solid #e2e2e2;border-bottom:none;border-radius:4px 4px 0 0"></div>
<svg style="left:1137px;top:86px" width="16" height="16" viewBox="0 0 16 16"><text x="0.5" y="11.5" font-size="9" font-family="Liberation Sans" fill="#606060" textLength="16" lengthAdjust="spacingAndGlyphs">(x)=</text></svg>
<div class="t" style="left:1157px;top:88.20px;font-size:13px;color:#000;font-weight:normal;transform:scaleX(0.9909);transform-origin:0 0;">Variables</div>
<svg style="left:1220px;top:86px" width="16" height="16" viewBox="0 0 16 16"><circle cx="3.5" cy="7.5" r="2.6" fill="none" stroke="#555" stroke-width="1.1"/><circle cx="10" cy="8" r="2.6" fill="none" stroke="#555" stroke-width="1.1"/><path d="M6 7.5 C6.5 6.8 7 6.8 7.5 7.5 M1 7 C1 3 4 2 6 3 M12.5 7.5 C12.5 4 14 2.5 16 2.5" fill="none" stroke="#555" stroke-width="1"/><path d="M6 13.5 L8 15.5 M8 13.5 L6 15.5 M9.5 13.8 H12 M9.5 15.2 H12" stroke="#555" stroke-width="0.8"/></svg>
<div class="t" style="left:1240px;top:88.20px;font-size:13px;color:#000;font-weight:normal;transform:scaleX(0.9603);transform-origin:0 0;">Expressions</div>
<svg style="left:1318px;top:86px" width="16" height="16" viewBox="0 0 16 16"><path d="M2.3 2.5 V7.5" stroke="#3a3a4a" stroke-width="1.1"/><ellipse cx="6.1" cy="5.0" rx="1.15" ry="2.1" fill="none" stroke="#3a3a4a" stroke-width="1"/><path d="M9.9 2.5 V7.5" stroke="#3a3a4a" stroke-width="1.1"/><ellipse cx="13.7" cy="5.0" rx="1.15" ry="2.1" fill="none" stroke="#3a3a4a" stroke-width="1"/><ellipse cx="2.3" cy="11.5" rx="1.15" ry="2.1" fill="none" stroke="#3a3a4a" stroke-width="1"/><path d="M6.1 9 V14" stroke="#3a3a4a" stroke-width="1.1"/><ellipse cx="9.9" cy="11.5" rx="1.15" ry="2.1" fill="none" stroke="#3a3a4a" stroke-width="1"/><path d="M13.7 9 V14" stroke="#3a3a4a" stroke-width="1.1"/></svg>
<div class="t" style="left:1338px;top:88.20px;font-size:13px;color:#000;font-weight:normal;transform:scaleX(0.9562);transform-origin:0 0;">Registers</div>
<svg style="left:1399px;top:90px" width="11" height="11" viewBox="0 0 11 11"><path d="M0.5 2.2 L2.2 0.5 L5.5 3.8 L8.8 0.5 L10.5 2.2 L7.2 5.5 L10.5 8.8 L8.8 10.5 L5.5 7.2 L2.2 10.5 L0.5 8.8 L3.8 5.5Z" fill="#fff" stroke="#6a6a6a" stroke-width="0.9" stroke-linejoin="round"/></svg>
<svg style="left:1421px;top:86px" width="16" height="16" viewBox="0 0 16 16"><circle cx="5" cy="5" r="3.5" fill="#4a8ad0" stroke="#2a5a9a" stroke-width="0.8"/><circle cx="11.5" cy="11" r="3.5" fill="#4a8ad0" stroke="#2a5a9a" stroke-width="0.8"/></svg>
<div class="t" style="left:1441.3px;top:88.20px;font-size:13px;color:#000;font-weight:normal;transform:scaleX(0.9964);transform-origin:0 0;">Breakpoints</div>
<svg style="left:1659px;top:86px" width="16" height="16" viewBox="0 0 16 16"><path d="M1.5 7 H14.5 V14.5 H1.5Z" fill="#f6f6f6" stroke="#c8c8c8"/><path d="M4 12 H5 M7 12 H8 M10 12 H11" stroke="#bdbdbd" stroke-width="1.4"/><path d="M4 2 C2 5 4 8 3 10 M1 9 L8 1" fill="none" stroke="#b0b0b0" stroke-width="1.2"/></svg>
<svg style="left:1679px;top:83px" width="23" height="21" viewBox="0 0 23 21"><rect x="0.5" y="0.5" width="22" height="20" fill="#cce4f7" stroke="#99c9ef"/></svg>
<svg style="left:1682px;top:86px" width="16" height="16" viewBox="0 0 16 16"><path d="M0.5 6 H5 V3.5 L9 7.5 L5 11.5 V9 H0.5Z" fill="#fff2a8" stroke="#c8a040" stroke-width="0.8"/><path d="M10.5 15 V2 M8.5 4.5 L10.5 1.5 L12.5 4.5" fill="none" stroke="#3a5aa0" stroke-width="1.4"/><path d="M10.5 8.5 H13 M10.5 13.5 H13" stroke="#3a5aa0" stroke-width="1.2"/><rect x="12.5" y="6.5" width="3" height="3.5" fill="#f0a0b0" stroke="#c03050" stroke-width="0.8"/><rect x="12.5" y="11.5" width="3" height="3.5" fill="#f0a0b0" stroke="#c03050" stroke-width="0.8"/></svg>
<svg style="left:1705px;top:86px" width="16" height="16" viewBox="0 0 16 16"><rect x="1.5" y="1.5" width="10" height="10" fill="#f0f4fa" stroke="#9aa6b6"/><rect x="4.5" y="4.5" width="10" height="10.5" fill="#e4f0fa" stroke="#8090a4"/><path d="M6.5 10 H12.5" stroke="#1a2a4a" stroke-width="1.4"/></svg>
<div class="a" style="left:1727px;top:86px;width:1px;height:17px;background:#8a8a8a;"></div>
<svg style="left:1736px;top:86px" width="16" height="16" viewBox="0 0 16 16"><path d="M3 1.5 H6 V10 H8 L4.5 15 L1 10 H3Z" fill="#f8d870" stroke="#c09030" stroke-width="0.9"/><path d="M9 14.5 H12 V6 H14.5 L10.5 1 L6.5 6 H9Z" fill="#fbe08a" stroke="#c09030" stroke-width="0.9"/></svg>
<div class="a" style="left:1758px;top:86px;width:1px;height:17px;background:#8a8a8a;"></div>
<svg style="left:1767px;top:86px" width="16" height="16" viewBox="0 0 16 16"><rect x="1.5" y="3.5" width="13" height="11.5" fill="#f4f8fc" stroke="#8a8a8a"/><path d="M1.5 4.5 H8" stroke="#3a78c8" stroke-width="2"/><path d="M11.5 1 L14.5 4.5 H12.5 V8 H10.5 V4.5 H8.5Z" fill="#fbe7a0" stroke="#c8a040" stroke-width="0.8"/></svg>
<svg style="left:1791px;top:86px" width="16" height="16" viewBox="0 0 16 16"><rect x="1.5" y="5.5" width="12" height="9.5" fill="#eef4fb" stroke="#8a8a8a"/><path d="M1.5 6.5 H8" stroke="#3a78c8" stroke-width="2"/><path d="M6 11 L10 7" stroke="#2a3a6a" stroke-width="1.2"/><path d="M9 5 L12.5 1.5 L15 4 L11.5 7.5Z" fill="#a8a8a8" stroke="#707070" stroke-width="0.8"/></svg>
<div class="a" style="left:1812px;top:86px;width:1px;height:17px;background:#8a8a8a;"></div>
<svg style="left:1821px;top:86px" width="16" height="16" viewBox="0 0 16 16"><path d="M2 9 C1 4 6 1 10 3 M13 7 C15 12 10 15 6 13" fill="none" stroke="#d8b030" stroke-width="2.4"/><path d="M8 0.5 L12.5 3 L8.5 6.5Z" fill="#f0d040" stroke="#a88820" stroke-width="0.6"/><path d="M8 15.5 L3.5 13 L7.5 9.5Z" fill="#f0d040" stroke="#a88820" stroke-width="0.6"/></svg>
<svg style="left:1853px;top:89px" width="10" height="6" viewBox="0 0 10 6"><path d="M0.5 0.5 H9.5 L5 5.5Z" fill="none" stroke="#555" stroke-width="1"/></svg>
<svg style="left:1873px;top:90px" width="10" height="4" viewBox="0 0 10 4"><rect x="0.5" y="0.5" width="9" height="3" fill="none" stroke="#555" stroke-width="1"/></svg>
<svg style="left:1896px;top:89px" width="11" height="10" viewBox="0 0 11 10"><rect x="0.5" y="0.5" width="9.5" height="9" fill="none" stroke="#555" stroke-width="1"/><path d="M0.5 2 H10" stroke="#555" stroke-width="1.2"/></svg>
<div class="t" style="left:1140.6px;top:112.20px;font-size:13px;color:#000;font-weight:normal;transform:scaleX(0.9805);transform-origin:0 0;">Name</div>
<div class="t" style="left:1401.7px;top:112.20px;font-size:13px;color:#000;font-weight:normal;transform:scaleX(0.9540);transform-origin:0 0;">Value</div>
<div class="t" style="left:1590px;top:112.20px;font-size:13px;color:#000;font-weight:normal;transform:scaleX(1.0073);transform-origin:0 0;">Description</div>
<div class="a" style="left:1394px;top:107px;width:1px;height:444px;background:#e8e8e8;"></div>
<div class="a" style="left:1583px;top:107px;width:1px;height:444px;background:#e8e8e8;"></div>
<div class="a" style="left:1133px;top:151px;width:767px;height:1px;background:#e8e8e8;"></div>
<svg style="left:1174.5px;top:138.0px" width="6" height="9" viewBox="0 0 6 9"><path d="M0.8 0.6 L4.6 4.5 L0.8 8.4" fill="none" stroke="#a0a0a0" stroke-width="1.7"/></svg>
<svg style="left:1186px;top:133px" width="16" height="16" viewBox="0 0 16 16"><path d="M2.3 2.5 V7.5" stroke="#3a3a4a" stroke-width="1.1"/><ellipse cx="6.1" cy="5.0" rx="1.15" ry="2.1" fill="none" stroke="#3a3a4a" stroke-width="1"/><path d="M9.9 2.5 V7.5" stroke="#3a3a4a" stroke-width="1.1"/><ellipse cx="13.7" cy="5.0" rx="1.15" ry="2.1" fill="none" stroke="#3a3a4a" stroke-width="1"/><ellipse cx="2.3" cy="11.5" rx="1.15" ry="2.1" fill="none" stroke="#3a3a4a" stroke-width="1"/><path d="M6.1 9 V14" stroke="#3a3a4a" stroke-width="1.1"/><ellipse cx="9.9" cy="11.5" rx="1.15" ry="2.1" fill="none" stroke="#3a3a4a" stroke-width="1"/><path d="M13.7 9 V14" stroke="#3a3a4a" stroke-width="1.1"/></svg>
<div class="t" style="left:1206.3px;top:134.20px;font-size:13px;color:#000;font-weight:normal;transform:scaleX(0.9024);transform-origin:0 0;">TPTC1RDMPUERRADD</div>
<div class="t" style="left:1400.3px;top:134.20px;font-size:13px;color:#000;font-weight:normal;transform:scaleX(0.9543);transform-origin:0 0;">0x00000000</div>
<div class="t" style="left:1589.7px;top:134.20px;font-size:13px;color:#000;font-weight:normal;transform:scaleX(1.0416);transform-origin:0 0;">Memory Mapped</div>
<div class="a" style="left:1133px;top:171px;width:767px;height:1px;background:#e8e8e8;"></div>
<svg style="left:1174.5px;top:158.0px" width="6" height="9" viewBox="0 0 6 9"><path d="M0.8 0.6 L4.6 4.5 L0.8 8.4" fill="none" stroke="#a0a0a0" stroke-width="1.7"/></svg>
<svg style="left:1186px;top:153px" width="16" height="16" viewBox="0 0 16 16"><path d="M2.3 2.5 V7.5" stroke="#3a3a4a" stroke-width="1.1"/><ellipse cx="6.1" cy="5.0" rx="1.15" ry="2.1" fill="none" stroke="#3a3a4a" stroke-width="1"/><path d="M9.9 2.5 V7.5" stroke="#3a3a4a" stroke-width="1.1"/><ellipse cx="13.7" cy="5.0" rx="1.15" ry="2.1" fill="none" stroke="#3a3a4a" stroke-width="1"/><ellipse cx="2.3" cy="11.5" rx="1.15" ry="2.1" fill="none" stroke="#3a3a4a" stroke-width="1"/><path d="M6.1 9 V14" stroke="#3a3a4a" stroke-width="1.1"/><ellipse cx="9.9" cy="11.5" rx="1.15" ry="2.1" fill="none" stroke="#3a3a4a" stroke-width="1"/><path d="M13.7 9 V14" stroke="#3a3a4a" stroke-width="1.1"/></svg>
<div class="t" style="left:1206.3px;top:154.20px;font-size:13px;color:#000;font-weight:normal;transform:scaleX(0.9017);transform-origin:0 0;">TPTCMPUVALIDCFG</div>
<div class="t" style="left:1400.3px;top:154.20px;font-size:13px;color:#000;font-weight:normal;transform:scaleX(0.9543);transform-origin:0 0;">0x00000000</div>
<div class="t" style="left:1589.7px;top:154.20px;font-size:13px;color:#000;font-weight:normal;transform:scaleX(1.0416);transform-origin:0 0;">Memory Mapped</div>
<div class="a" style="left:1133px;top:191px;width:767px;height:1px;background:#e8e8e8;"></div>
<svg style="left:1174.5px;top:178.0px" width="6" height="9" viewBox="0 0 6 9"><path d="M0.8 0.6 L4.6 4.5 L0.8 8.4" fill="none" stroke="#a0a0a0" stroke-width="1.7"/></svg>
<svg style="left:1186px;top:173px" width="16" height="16" viewBox="0 0 16 16"><path d="M2.3 2.5 V7.5" stroke="#3a3a4a" stroke-width="1.1"/><ellipse cx="6.1" cy="5.0" rx="1.15" ry="2.1" fill="none" stroke="#3a3a4a" stroke-width="1"/><path d="M9.9 2.5 V7.5" stroke="#3a3a4a" stroke-width="1.1"/><ellipse cx="13.7" cy="5.0" rx="1.15" ry="2.1" fill="none" stroke="#3a3a4a" stroke-width="1"/><ellipse cx="2.3" cy="11.5" rx="1.15" ry="2.1" fill="none" stroke="#3a3a4a" stroke-width="1"/><path d="M6.1 9 V14" stroke="#3a3a4a" stroke-width="1.1"/><ellipse cx="9.9" cy="11.5" rx="1.15" ry="2.1" fill="none" stroke="#3a3a4a" stroke-width="1"/><path d="M13.7 9 V14" stroke="#3a3a4a" stroke-width="1.1"/></svg>
<div class="t" style="left:1206.3px;top:174.20px;font-size:13px;color:#000;font-weight:normal;transform:scaleX(0.8926);transform-origin:0 0;">TPTCMPUENCFG</div>
<div class="t" style="left:1400.3px;top:174.20px;font-size:13px;color:#000;font-weight:normal;transform:scaleX(0.9543);transform-origin:0 0;">0x00000000</div>
<div class="t" style="left:1589.7px;top:174.20px;font-size:13px;color:#000;font-weight:normal;transform:scaleX(1.0416);transform-origin:0 0;">Memory Mapped</div>
<div class="a" style="left:1133px;top:211px;width:767px;height:1px;background:#e8e8e8;"></div>
<svg style="left:1174.5px;top:198.0px" width="6" height="9" viewBox="0 0 6 9"><path d="M0.8 0.6 L4.6 4.5 L0.8 8.4" fill="none" stroke="#a0a0a0" stroke-width="1.7"/></svg>
<svg style="left:1186px;top:193px" width="16" height="16" viewBox="0 0 16 16"><path d="M2.3 2.5 V7.5" stroke="#3a3a4a" stroke-width="1.1"/><ellipse cx="6.1" cy="5.0" rx="1.15" ry="2.1" fill="none" stroke="#3a3a4a" stroke-width="1"/><path d="M9.9 2.5 V7.5" stroke="#3a3a4a" stroke-width="1.1"/><ellipse cx="13.7" cy="5.0" rx="1.15" ry="2.1" fill="none" stroke="#3a3a4a" stroke-width="1"/><ellipse cx="2.3" cy="11.5" rx="1.15" ry="2.1" fill="none" stroke="#3a3a4a" stroke-width="1"/><path d="M6.1 9 V14" stroke="#3a3a4a" stroke-width="1.1"/><ellipse cx="9.9" cy="11.5" rx="1.15" ry="2.1" fill="none" stroke="#3a3a4a" stroke-width="1"/><path d="M13.7 9 V14" stroke="#3a3a4a" stroke-width="1.1"/></svg>
<div class="t" style="left:1206.3px;top:194.20px;font-size:13px;color:#000;font-weight:normal;transform:scaleX(0.8880);transform-origin:0 0;">TESTPATTERNRX1ICFG</div>
<div class="t" style="left:1400.3px;top:194.20px;font-size:13px;color:#000;font-weight:normal;transform:scaleX(0.9543);transform-origin:0 0;">0x00010000</div>
<div class="t" style="left:1589.7px;top:194.20px;font-size:13px;color:#000;font-weight:normal;transform:scaleX(1.0416);transform-origin:0 0;">Memory Mapped</div>
<div class="a" style="left:1133px;top:231px;width:767px;height:1px;background:#e8e8e8;"></div>
<svg style="left:1174.5px;top:218.0px" width="6" height="9" viewBox="0 0 6 9"><path d="M0.8 0.6 L4.6 4.5 L0.8 8.4" fill="none" stroke="#a0a0a0" stroke-width="1.7"/></svg>
<svg style="left:1186px;top:213px" width="16" height="16" viewBox="0 0 16 16"><path d="M2.3 2.5 V7.5" stroke="#3a3a4a" stroke-width="1.1"/><ellipse cx="6.1" cy="5.0" rx="1.15" ry="2.1" fill="none" stroke="#3a3a4a" stroke-width="1"/><path d="M9.9 2.5 V7.5" stroke="#3a3a4a" stroke-width="1.1"/><ellipse cx="13.7" cy="5.0" rx="1.15" ry="2.1" fill="none" stroke="#3a3a4a" stroke-width="1"/><ellipse cx="2.3" cy="11.5" rx="1.15" ry="2.1" fill="none" stroke="#3a3a4a" stroke-width="1"/><path d="M6.1 9 V14" stroke="#3a3a4a" stroke-width="1.1"/><ellipse cx="9.9" cy="11.5" rx="1.15" ry="2.1" fill="none" stroke="#3a3a4a" stroke-width="1"/><path d="M13.7 9 V14" stroke="#3a3a4a" stroke-width="1.1"/></svg>
<div class="t" style="left:1206.3px;top:214.20px;font-size:13px;color:#000;font-weight:normal;transform:scaleX(0.8880);transform-origin:0 0;">TESTPATTERNRX2ICFG</div>
<div class="t" style="left:1400.3px;top:214.20px;font-size:13px;color:#000;font-weight:normal;transform:scaleX(0.9543);transform-origin:0 0;">0x00010000</div>
<div class="t" style="left:1589.7px;top:214.20px;font-size:13px;color:#000;font-weight:normal;transform:scaleX(1.0416);transform-origin:0 0;">Memory Mapped</div>
<div class="a" style="left:1133px;top:251px;width:767px;height:1px;background:#e8e8e8;"></div>
<svg style="left:1174.5px;top:238.0px" width="6" height="9" viewBox="0 0 6 9"><path d="M0.8 0.6 L4.6 4.5 L0.8 8.4" fill="none" stroke="#a0a0a0" stroke-width="1.7"/></svg>
<svg style="left:1186px;top:233px" width="16" height="16" viewBox="0 0 16 16"><path d="M2.3 2.5 V7.5" stroke="#3a3a4a" stroke-width="1.1"/><ellipse cx="6.1" cy="5.0" rx="1.15" ry="2.1" fill="none" stroke="#3a3a4a" stroke-width="1"/><path d="M9.9 2.5 V7.5" stroke="#3a3a4a" stroke-width="1.1"/><ellipse cx="13.7" cy="5.0" rx="1.15" ry="2.1" fill="none" stroke="#3a3a4a" stroke-width="1"/><ellipse cx="2.3" cy="11.5" rx="1.15" ry="2.1" fill="none" stroke="#3a3a4a" stroke-width="1"/><path d="M6.1 9 V14" stroke="#3a3a4a" stroke-width="1.1"/><ellipse cx="9.9" cy="11.5" rx="1.15" ry="2.1" fill="none" stroke="#3a3a4a" stroke-width="1"/><path d="M13.7 9 V14" stroke="#3a3a4a" stroke-width="1.1"/></svg>
<div class="t" style="left:1206.3px;top:234.20px;font-size:13px;color:#000;font-weight:normal;transform:scaleX(0.8880);transform-origin:0 0;">TESTPATTERNRX3ICFG</div>
<div class="t" style="left:1400.3px;top:234.20px;font-size:13px;color:#000;font-weight:normal;transform:scaleX(0.9543);transform-origin:0 0;">0x00010000</div>
<div class="t" style="left:1589.7px;top:234.20px;font-size:13px;color:#000;font-weight:normal;transform:scaleX(1.0416);transform-origin:0 0;">Memory Mapped</div>
<div class="a" style="left:1133px;top:271px;width:767px;height:1px;background:#e8e8e8;"></div>
<svg style="left:1174.5px;top:258.0px" width="6" height="9" viewBox="0 0 6 9"><path d="M0.8 0.6 L4.6 4.5 L0.8 8.4" fill="none" stroke="#a0a0a0" stroke-width="1.7"/></svg>
<svg style="left:1186px;top:253px" width="16" height="16" viewBox="0 0 16 16"><path d="M2.3 2.5 V7.5" stroke="#3a3a4a" stroke-width="1.1"/><ellipse cx="6.1" cy="5.0" rx="1.15" ry="2.1" fill="none" stroke="#3a3a4a" stroke-width="1"/><path d="M9.9 2.5 V7.5" stroke="#3a3a4a" stroke-width="1.1"/><ellipse cx="13.7" cy="5.0" rx="1.15" ry="2.1" fill="none" stroke="#3a3a4a" stroke-width="1"/><ellipse cx="2.3" cy="11.5" rx="1.15" ry="2.1" fill="none" stroke="#3a3a4a" stroke-width="1"/><path d="M6.1 9 V14" stroke="#3a3a4a" stroke-width="1.1"/><ellipse cx="9.9" cy="11.5" rx="1.15" ry="2.1" fill="none" stroke="#3a3a4a" stroke-width="1"/><path d="M13.7 9 V14" stroke="#3a3a4a" stroke-width="1.1"/></svg>
<div class="t" style="left:1206.3px;top:254.20px;font-size:13px;color:#000;font-weight:normal;transform:scaleX(0.8880);transform-origin:0 0;">TESTPATTERNRX4ICFG</div>
<div class="t" style="left:1400.3px;top:254.20px;font-size:13px;color:#000;font-weight:normal;transform:scaleX(0.9543);transform-origin:0 0;">0x00010000</div>
<div class="t" style="left:1589.7px;top:254.20px;font-size:13px;color:#000;font-weight:normal;transform:scaleX(1.0416);transform-origin:0 0;">Memory Mapped</div>
<div class="a" style="left:1133px;top:291px;width:767px;height:1px;background:#e8e8e8;"></div>
<svg style="left:1174.5px;top:278.0px" width="6" height="9" viewBox="0 0 6 9"><path d="M0.8 0.6 L4.6 4.5 L0.8 8.4" fill="none" stroke="#a0a0a0" stroke-width="1.7"/></svg>
<svg style="left:1186px;top:273px" width="16" height="16" viewBox="0 0 16 16"><path d="M2.3 2.5 V7.5" stroke="#3a3a4a" stroke-width="1.1"/><ellipse cx="6.1" cy="5.0" rx="1.15" ry="2.1" fill="none" stroke="#3a3a4a" stroke-width="1"/><path d="M9.9 2.5 V7.5" stroke="#3a3a4a" stroke-width="1.1"/><ellipse cx="13.7" cy="5.0" rx="1.15" ry="2.1" fill="none" stroke="#3a3a4a" stroke-width="1"/><ellipse cx="2.3" cy="11.5" rx="1.15" ry="2.1" fill="none" stroke="#3a3a4a" stroke-width="1"/><path d="M6.1 9 V14" stroke="#3a3a4a" stroke-width="1.1"/><ellipse cx="9.9" cy="11.5" rx="1.15" ry="2.1" fill="none" stroke="#3a3a4a" stroke-width="1"/><path d="M13.7 9 V14" stroke="#3a3a4a" stroke-width="1.1"/></svg>
<div class="t" style="left:1206.3px;top:274.20px;font-size:13px;color:#000;font-weight:normal;transform:scaleX(0.8908);transform-origin:0 0;">TESTPATTERNRX1QCFG</div>
<div class="t" style="left:1400.3px;top:274.20px;font-size:13px;color:#000;font-weight:normal;transform:scaleX(0.9543);transform-origin:0 0;">0x00010000</div>
<div class="t" style="left:1589.7px;top:274.20px;font-size:13px;color:#000;font-weight:normal;transform:scaleX(1.0416);transform-origin:0 0;">Memory Mapped</div>
<div class="a" style="left:1133px;top:311px;width:767px;height:1px;background:#e8e8e8;"></div>
<svg style="left:1174.5px;top:298.0px" width="6" height="9" viewBox="0 0 6 9"><path d="M0.8 0.6 L4.6 4.5 L0.8 8.4" fill="none" stroke="#a0a0a0" stroke-width="1.7"/></svg>
<svg style="left:1186px;top:293px" width="16" height="16" viewBox="0 0 16 16"><path d="M2.3 2.5 V7.5" stroke="#3a3a4a" stroke-width="1.1"/><ellipse cx="6.1" cy="5.0" rx="1.15" ry="2.1" fill="none" stroke="#3a3a4a" stroke-width="1"/><path d="M9.9 2.5 V7.5" stroke="#3a3a4a" stroke-width="1.1"/><ellipse cx="13.7" cy="5.0" rx="1.15" ry="2.1" fill="none" stroke="#3a3a4a" stroke-width="1"/><ellipse cx="2.3" cy="11.5" rx="1.15" ry="2.1" fill="none" stroke="#3a3a4a" stroke-width="1"/><path d="M6.1 9 V14" stroke="#3a3a4a" stroke-width="1.1"/><ellipse cx="9.9" cy="11.5" rx="1.15" ry="2.1" fill="none" stroke="#3a3a4a" stroke-width="1"/><path d="M13.7 9 V14" stroke="#3a3a4a" stroke-width="1.1"/></svg>
<div class="t" style="left:1206.3px;top:294.20px;font-size:13px;color:#000;font-weight:normal;transform:scaleX(0.8908);transform-origin:0 0;">TESTPATTERNRX2QCFG</div>
<div class="t" style="left:1400.3px;top:294.20px;font-size:13px;color:#000;font-weight:normal;transform:scaleX(0.9543);transform-origin:0 0;">0x00010000</div>
<div class="t" style="left:1589.7px;top:294.20px;font-size:13px;color:#000;font-weight:normal;transform:scaleX(1.0416);transform-origin:0 0;">Memory Mapped</div>
<div class="a" style="left:1133px;top:331px;width:767px;height:1px;background:#e8e8e8;"></div>
<svg style="left:1174.5px;top:318.0px" width="6" height="9" viewBox="0 0 6 9"><path d="M0.8 0.6 L4.6 4.5 L0.8 8.4" fill="none" stroke="#a0a0a0" stroke-width="1.7"/></svg>
<svg style="left:1186px;top:313px" width="16" height="16" viewBox="0 0 16 16"><path d="M2.3 2.5 V7.5" stroke="#3a3a4a" stroke-width="1.1"/><ellipse cx="6.1" cy="5.0" rx="1.15" ry="2.1" fill="none" stroke="#3a3a4a" stroke-width="1"/><path d="M9.9 2.5 V7.5" stroke="#3a3a4a" stroke-width="1.1"/><ellipse cx="13.7" cy="5.0" rx="1.15" ry="2.1" fill="none" stroke="#3a3a4a" stroke-width="1"/><ellipse cx="2.3" cy="11.5" rx="1.15" ry="2.1" fill="none" stroke="#3a3a4a" stroke-width="1"/><path d="M6.1 9 V14" stroke="#3a3a4a" stroke-width="1.1"/><ellipse cx="9.9" cy="11.5" rx="1.15" ry="2.1" fill="none" stroke="#3a3a4a" stroke-width="1"/><path d="M13.7 9 V14" stroke="#3a3a4a" stroke-width="1.1"/></svg>
<div class="t" style="left:1206.3px;top:314.20px;font-size:13px;color:#000;font-weight:normal;transform:scaleX(0.8908);transform-origin:0 0;">TESTPATTERNRX3QCFG</div>
<div class="t" style="left:1400.3px;top:314.20px;font-size:13px;color:#000;font-weight:normal;transform:scaleX(0.9543);transform-origin:0 0;">0x00010000</div>
<div class="t" style="left:1589.7px;top:314.20px;font-size:13px;color:#000;font-weight:normal;transform:scaleX(1.0416);transform-origin:0 0;">Memory Mapped</div>
<div class="a" style="left:1133px;top:351px;width:767px;height:1px;background:#e8e8e8;"></div>
<svg style="left:1174.5px;top:338.0px" width="6" height="9" viewBox="0 0 6 9"><path d="M0.8 0.6 L4.6 4.5 L0.8 8.4" fill="none" stroke="#a0a0a0" stroke-width="1.7"/></svg>
<svg style="left:1186px;top:333px" width="16" height="16" viewBox="0 0 16 16"><path d="M2.3 2.5 V7.5" stroke="#3a3a4a" stroke-width="1.1"/><ellipse cx="6.1" cy="5.0" rx="1.15" ry="2.1" fill="none" stroke="#3a3a4a" stroke-width="1"/><path d="M9.9 2.5 V7.5" stroke="#3a3a4a" stroke-width="1.1"/><ellipse cx="13.7" cy="5.0" rx="1.15" ry="2.1" fill="none" stroke="#3a3a4a" stroke-width="1"/><ellipse cx="2.3" cy="11.5" rx="1.15" ry="2.1" fill="none" stroke="#3a3a4a" stroke-width="1"/><path d="M6.1 9 V14" stroke="#3a3a4a" stroke-width="1.1"/><ellipse cx="9.9" cy="11.5" rx="1.15" ry="2.1" fill="none" stroke="#3a3a4a" stroke-width="1"/><path d="M13.7 9 V14" stroke="#3a3a4a" stroke-width="1.1"/></svg>
<div class="t" style="left:1206.3px;top:334.20px;font-size:13px;color:#000;font-weight:normal;transform:scaleX(0.8908);transform-origin:0 0;">TESTPATTERNRX4QCFG</div>
<div class="t" style="left:1400.3px;top:334.20px;font-size:13px;color:#000;font-weight:normal;transform:scaleX(0.9543);transform-origin:0 0;">0x00010000</div>
<div class="t" style="left:1589.7px;top:334.20px;font-size:13px;color:#000;font-weight:normal;transform:scaleX(1.0416);transform-origin:0 0;">Memory Mapped</div>
<div class="a" style="left:1133px;top:351px;width:767px;height:20px;background:#e5f3fb;"></div>
<div class="a" style="left:1133px;top:371px;width:767px;height:1px;background:#e8e8e8;"></div>
<svg style="left:1174.5px;top:358.0px" width="6" height="9" viewBox="0 0 6 9"><path d="M0.8 0.6 L4.6 4.5 L0.8 8.4" fill="none" stroke="#a0a0a0" stroke-width="1.7"/></svg>
<svg style="left:1186px;top:353px" width="16" height="16" viewBox="0 0 16 16"><path d="M2.3 2.5 V7.5" stroke="#3a3a4a" stroke-width="1.1"/><ellipse cx="6.1" cy="5.0" rx="1.15" ry="2.1" fill="none" stroke="#3a3a4a" stroke-width="1"/><path d="M9.9 2.5 V7.5" stroke="#3a3a4a" stroke-width="1.1"/><ellipse cx="13.7" cy="5.0" rx="1.15" ry="2.1" fill="none" stroke="#3a3a4a" stroke-width="1"/><ellipse cx="2.3" cy="11.5" rx="1.15" ry="2.1" fill="none" stroke="#3a3a4a" stroke-width="1"/><path d="M6.1 9 V14" stroke="#3a3a4a" stroke-width="1.1"/><ellipse cx="9.9" cy="11.5" rx="1.15" ry="2.1" fill="none" stroke="#3a3a4a" stroke-width="1"/><path d="M13.7 9 V14" stroke="#3a3a4a" stroke-width="1.1"/></svg>
<div class="t" style="left:1206.3px;top:354.20px;font-size:13px;color:#000;font-weight:normal;transform:scaleX(0.8818);transform-origin:0 0;">TESTPATTERNVLDCFG</div>
<div class="t" style="left:1400.3px;top:354.20px;font-size:13px;color:#000;font-weight:normal;transform:scaleX(0.9543);transform-origin:0 0;">0x00000008</div>
<div class="t" style="left:1589.7px;top:354.20px;font-size:13px;color:#000;font-weight:normal;transform:scaleX(1.0416);transform-origin:0 0;">Memory Mapped</div>
<div class="a" style="left:1395px;top:371px;width:188px;height:20px;background:#ffff00;"></div>
<div class="a" style="left:1133px;top:391px;width:767px;height:1px;background:#e8e8e8;"></div>
<svg style="left:1172.5px;top:380.0px" width="9" height="6" viewBox="0 0 9 6"><path d="M0.8 0.8 L4.5 4.5 L8.2 0.8" fill="none" stroke="#555" stroke-width="1.7"/></svg>
<svg style="left:1186px;top:373px" width="16" height="16" viewBox="0 0 16 16"><path d="M2.3 2.5 V7.5" stroke="#3a3a4a" stroke-width="1.1"/><ellipse cx="6.1" cy="5.0" rx="1.15" ry="2.1" fill="none" stroke="#3a3a4a" stroke-width="1"/><path d="M9.9 2.5 V7.5" stroke="#3a3a4a" stroke-width="1.1"/><ellipse cx="13.7" cy="5.0" rx="1.15" ry="2.1" fill="none" stroke="#3a3a4a" stroke-width="1"/><ellipse cx="2.3" cy="11.5" rx="1.15" ry="2.1" fill="none" stroke="#3a3a4a" stroke-width="1"/><path d="M6.1 9 V14" stroke="#3a3a4a" stroke-width="1.1"/><ellipse cx="9.9" cy="11.5" rx="1.15" ry="2.1" fill="none" stroke="#3a3a4a" stroke-width="1"/><path d="M13.7 9 V14" stroke="#3a3a4a" stroke-width="1.1"/></svg>
<div class="t" style="left:1206.3px;top:374.20px;font-size:13px;color:#000;font-weight:normal;transform:scaleX(0.9033);transform-origin:0 0;">DSSMISC</div>
<div class="t" style="left:1400.3px;top:374.20px;font-size:13px;color:#000;font-weight:normal;transform:scaleX(0.9543);transform-origin:0 0;">0x00000000</div>
<div class="t" style="left:1589.7px;top:374.20px;font-size:13px;color:#000;font-weight:normal;transform:scaleX(1.0416);transform-origin:0 0;">Memory Mapped</div>
<div class="a" style="left:1395px;top:391px;width:188px;height:20px;background:#ffff00;"></div>
<div class="a" style="left:1133px;top:411px;width:767px;height:1px;background:#e8e8e8;"></div>
<svg style="left:1202px;top:393px" width="16" height="16" viewBox="0 0 16 16"><path d="M2.3 2.5 V7.5" stroke="#3a3a4a" stroke-width="1.1"/><ellipse cx="6.1" cy="5.0" rx="1.15" ry="2.1" fill="none" stroke="#3a3a4a" stroke-width="1"/><path d="M9.9 2.5 V7.5" stroke="#3a3a4a" stroke-width="1.1"/><ellipse cx="13.7" cy="5.0" rx="1.15" ry="2.1" fill="none" stroke="#3a3a4a" stroke-width="1"/><ellipse cx="2.3" cy="11.5" rx="1.15" ry="2.1" fill="none" stroke="#3a3a4a" stroke-width="1"/><path d="M6.1 9 V14" stroke="#3a3a4a" stroke-width="1.1"/><ellipse cx="9.9" cy="11.5" rx="1.15" ry="2.1" fill="none" stroke="#3a3a4a" stroke-width="1"/><path d="M13.7 9 V14" stroke="#3a3a4a" stroke-width="1.1"/></svg>
<div class="t" style="left:1222.6px;top:394.20px;font-size:13px;color:#000;font-weight:normal;transform:scaleX(0.8720);transform-origin:0 0;">FFTACCSLVEN</div>
<div class="t" style="left:1400.3px;top:394.20px;font-size:13px;color:#000;font-weight:normal;transform:scaleX(0.9682);transform-origin:0 0;">000</div>
<div class="t" style="left:1589.7px;top:394.20px;font-size:13px;color:#000;font-weight:normal;transform:scaleX(1.0110);transform-origin:0 0;">Enable HW Accelerator  000--&gt;Disable,  111--&gt;Enabl.</div>
<div class="a" style="left:1133px;top:431px;width:767px;height:1px;background:#e8e8e8;"></div>
<svg style="left:1174.5px;top:418.0px" width="6" height="9" viewBox="0 0 6 9"><path d="M0.8 0.6 L4.6 4.5 L0.8 8.4" fill="none" stroke="#a0a0a0" stroke-width="1.7"/></svg>
<svg style="left:1186px;top:413px" width="16" height="16" viewBox="0 0 16 16"><path d="M2.3 2.5 V7.5" stroke="#3a3a4a" stroke-width="1.1"/><ellipse cx="6.1" cy="5.0" rx="1.15" ry="2.1" fill="none" stroke="#3a3a4a" stroke-width="1"/><path d="M9.9 2.5 V7.5" stroke="#3a3a4a" stroke-width="1.1"/><ellipse cx="13.7" cy="5.0" rx="1.15" ry="2.1" fill="none" stroke="#3a3a4a" stroke-width="1"/><ellipse cx="2.3" cy="11.5" rx="1.15" ry="2.1" fill="none" stroke="#3a3a4a" stroke-width="1"/><path d="M6.1 9 V14" stroke="#3a3a4a" stroke-width="1.1"/><ellipse cx="9.9" cy="11.5" rx="1.15" ry="2.1" fill="none" stroke="#3a3a4a" stroke-width="1"/><path d="M13.7 9 V14" stroke="#3a3a4a" stroke-width="1.1"/></svg>
<div class="t" style="left:1206.3px;top:414.20px;font-size:13px;color:#000;font-weight:normal;transform:scaleX(0.8732);transform-origin:0 0;">TPCC1PARSTATCFG</div>
<div class="t" style="left:1400.3px;top:414.20px;font-size:13px;color:#d8263a;font-weight:normal;transform:scaleX(1.0232);transform-origin:0 0;">Error: unable to read</div>
<div class="t" style="left:1589.7px;top:414.20px;font-size:13px;color:#000;font-weight:normal;transform:scaleX(1.0416);transform-origin:0 0;">Memory Mapped</div>
<div class="a" style="left:1133px;top:431px;width:767px;height:20px;background:#d9d9d9;"></div>
<div class="a" style="left:1133px;top:451px;width:767px;height:1px;background:#e8e8e8;"></div>
<svg style="left:1174.5px;top:438.0px" width="6" height="9" viewBox="0 0 6 9"><path d="M0.8 0.6 L4.6 4.5 L0.8 8.4" fill="none" stroke="#a0a0a0" stroke-width="1.7"/></svg>
<svg style="left:1186px;top:433px" width="16" height="16" viewBox="0 0 16 16"><path d="M2.3 2.5 V7.5" stroke="#3a3a4a" stroke-width="1.1"/><ellipse cx="6.1" cy="5.0" rx="1.15" ry="2.1" fill="none" stroke="#3a3a4a" stroke-width="1"/><path d="M9.9 2.5 V7.5" stroke="#3a3a4a" stroke-width="1.1"/><ellipse cx="13.7" cy="5.0" rx="1.15" ry="2.1" fill="none" stroke="#3a3a4a" stroke-width="1"/><ellipse cx="2.3" cy="11.5" rx="1.15" ry="2.1" fill="none" stroke="#3a3a4a" stroke-width="1"/><path d="M6.1 9 V14" stroke="#3a3a4a" stroke-width="1.1"/><ellipse cx="9.9" cy="11.5" rx="1.15" ry="2.1" fill="none" stroke="#3a3a4a" stroke-width="1"/><path d="M13.7 9 V14" stroke="#3a3a4a" stroke-width="1.1"/></svg>
<div class="t" style="left:1206.3px;top:434.20px;font-size:13px;color:#000;font-weight:normal;transform:scaleX(0.9905);transform-origin:0 0;">DMMSWINT1</div>
<div class="t" style="left:1400.3px;top:434.20px;font-size:13px;color:#000;font-weight:normal;transform:scaleX(1.0232);transform-origin:0 0;">Error: unable to read</div>
<div class="t" style="left:1589.7px;top:434.20px;font-size:13px;color:#000;font-weight:normal;transform:scaleX(1.0416);transform-origin:0 0;">Memory Mapped</div>
<div class="a" style="left:1133px;top:471px;width:767px;height:1px;background:#e8e8e8;"></div>
<svg style="left:1174.5px;top:458.0px" width="6" height="9" viewBox="0 0 6 9"><path d="M0.8 0.6 L4.6 4.5 L0.8 8.4" fill="none" stroke="#a0a0a0" stroke-width="1.7"/></svg>
<svg style="left:1186px;top:453px" width="16" height="16" viewBox="0 0 16 16"><path d="M2.3 2.5 V7.5" stroke="#3a3a4a" stroke-width="1.1"/><ellipse cx="6.1" cy="5.0" rx="1.15" ry="2.1" fill="none" stroke="#3a3a4a" stroke-width="1"/><path d="M9.9 2.5 V7.5" stroke="#3a3a4a" stroke-width="1.1"/><ellipse cx="13.7" cy="5.0" rx="1.15" ry="2.1" fill="none" stroke="#3a3a4a" stroke-width="1"/><ellipse cx="2.3" cy="11.5" rx="1.15" ry="2.1" fill="none" stroke="#3a3a4a" stroke-width="1"/><path d="M6.1 9 V14" stroke="#3a3a4a" stroke-width="1.1"/><ellipse cx="9.9" cy="11.5" rx="1.15" ry="2.1" fill="none" stroke="#3a3a4a" stroke-width="1"/><path d="M13.7 9 V14" stroke="#3a3a4a" stroke-width="1.1"/></svg>
<div class="t" style="left:1206.3px;top:454.20px;font-size:13px;color:#000;font-weight:normal;transform:scaleX(0.8864);transform-origin:0 0;">DSSINTRCFG</div>
<div class="t" style="left:1400.3px;top:454.20px;font-size:13px;color:#d8263a;font-weight:normal;transform:scaleX(1.0232);transform-origin:0 0;">Error: unable to read</div>
<div class="t" style="left:1589.7px;top:454.20px;font-size:13px;color:#000;font-weight:normal;transform:scaleX(1.0416);transform-origin:0 0;">Memory Mapped</div>
<div class="a" style="left:1133px;top:491px;width:767px;height:1px;background:#e8e8e8;"></div>
<svg style="left:1174.5px;top:478.0px" width="6" height="9" viewBox="0 0 6 9"><path d="M0.8 0.6 L4.6 4.5 L0.8 8.4" fill="none" stroke="#a0a0a0" stroke-width="1.7"/></svg>
<svg style="left:1186px;top:473px" width="16" height="16" viewBox="0 0 16 16"><path d="M2.3 2.5 V7.5" stroke="#3a3a4a" stroke-width="1.1"/><ellipse cx="6.1" cy="5.0" rx="1.15" ry="2.1" fill="none" stroke="#3a3a4a" stroke-width="1"/><path d="M9.9 2.5 V7.5" stroke="#3a3a4a" stroke-width="1.1"/><ellipse cx="13.7" cy="5.0" rx="1.15" ry="2.1" fill="none" stroke="#3a3a4a" stroke-width="1"/><ellipse cx="2.3" cy="11.5" rx="1.15" ry="2.1" fill="none" stroke="#3a3a4a" stroke-width="1"/><path d="M6.1 9 V14" stroke="#3a3a4a" stroke-width="1.1"/><ellipse cx="9.9" cy="11.5" rx="1.15" ry="2.1" fill="none" stroke="#3a3a4a" stroke-width="1"/><path d="M13.7 9 V14" stroke="#3a3a4a" stroke-width="1.1"/></svg>
<div class="t" style="left:1206.3px;top:474.20px;font-size:13px;color:#000;font-weight:normal;transform:scaleX(0.9298);transform-origin:0 0;">MPUMSTIDCFG1</div>
<div class="t" style="left:1400.3px;top:474.20px;font-size:13px;color:#d8263a;font-weight:normal;transform:scaleX(1.0232);transform-origin:0 0;">Error: unable to read</div>
<div class="t" style="left:1589.7px;top:474.20px;font-size:13px;color:#000;font-weight:normal;transform:scaleX(1.0416);transform-origin:0 0;">Memory Mapped</div>
<div class="a" style="left:1133px;top:511px;width:767px;height:1px;background:#e8e8e8;"></div>
<svg style="left:1174.5px;top:498.0px" width="6" height="9" viewBox="0 0 6 9"><path d="M0.8 0.6 L4.6 4.5 L0.8 8.4" fill="none" stroke="#a0a0a0" stroke-width="1.7"/></svg>
<svg style="left:1186px;top:493px" width="16" height="16" viewBox="0 0 16 16"><path d="M2.3 2.5 V7.5" stroke="#3a3a4a" stroke-width="1.1"/><ellipse cx="6.1" cy="5.0" rx="1.15" ry="2.1" fill="none" stroke="#3a3a4a" stroke-width="1"/><path d="M9.9 2.5 V7.5" stroke="#3a3a4a" stroke-width="1.1"/><ellipse cx="13.7" cy="5.0" rx="1.15" ry="2.1" fill="none" stroke="#3a3a4a" stroke-width="1"/><ellipse cx="2.3" cy="11.5" rx="1.15" ry="2.1" fill="none" stroke="#3a3a4a" stroke-width="1"/><path d="M6.1 9 V14" stroke="#3a3a4a" stroke-width="1.1"/><ellipse cx="9.9" cy="11.5" rx="1.15" ry="2.1" fill="none" stroke="#3a3a4a" stroke-width="1"/><path d="M13.7 9 V14" stroke="#3a3a4a" stroke-width="1.1"/></svg>
<div class="t" style="left:1206.3px;top:494.20px;font-size:13px;color:#000;font-weight:normal;transform:scaleX(0.9298);transform-origin:0 0;">MPUMSTIDCFG2</div>
<div class="t" style="left:1400.3px;top:494.20px;font-size:13px;color:#d8263a;font-weight:normal;transform:scaleX(1.0232);transform-origin:0 0;">Error: unable to read</div>
<div class="t" style="left:1589.7px;top:494.20px;font-size:13px;color:#000;font-weight:normal;transform:scaleX(1.0416);transform-origin:0 0;">Memory Mapped</div>
<div class="a" style="left:1133px;top:531px;width:767px;height:1px;background:#e8e8e8;"></div>
<svg style="left:1174.5px;top:518.0px" width="6" height="9" viewBox="0 0 6 9"><path d="M0.8 0.6 L4.6 4.5 L0.8 8.4" fill="none" stroke="#a0a0a0" stroke-width="1.7"/></svg>
<svg style="left:1186px;top:513px" width="16" height="16" viewBox="0 0 16 16"><path d="M2.3 2.5 V7.5" stroke="#3a3a4a" stroke-width="1.1"/><ellipse cx="6.1" cy="5.0" rx="1.15" ry="2.1" fill="none" stroke="#3a3a4a" stroke-width="1"/><path d="M9.9 2.5 V7.5" stroke="#3a3a4a" stroke-width="1.1"/><ellipse cx="13.7" cy="5.0" rx="1.15" ry="2.1" fill="none" stroke="#3a3a4a" stroke-width="1"/><ellipse cx="2.3" cy="11.5" rx="1.15" ry="2.1" fill="none" stroke="#3a3a4a" stroke-width="1"/><path d="M6.1 9 V14" stroke="#3a3a4a" stroke-width="1.1"/><ellipse cx="9.9" cy="11.5" rx="1.15" ry="2.1" fill="none" stroke="#3a3a4a" stroke-width="1"/><path d="M13.7 9 V14" stroke="#3a3a4a" stroke-width="1.1"/></svg>
<div class="t" style="left:1206.3px;top:514.20px;font-size:13px;color:#000;font-weight:normal;transform:scaleX(0.9298);transform-origin:0 0;">MPUMSTIDCFG3</div>
<div class="t" style="left:1400.3px;top:514.20px;font-size:13px;color:#d8263a;font-weight:normal;transform:scaleX(1.0232);transform-origin:0 0;">Error: unable to read</div>
<div class="t" style="left:1589.7px;top:514.20px;font-size:13px;color:#000;font-weight:normal;transform:scaleX(1.0416);transform-origin:0 0;">Memory Mapped</div>
<div class="a" style="left:1133px;top:551px;width:767px;height:1px;background:#e8e8e8;"></div>
<svg style="left:1174.5px;top:538.0px" width="6" height="9" viewBox="0 0 6 9"><path d="M0.8 0.6 L4.6 4.5 L0.8 8.4" fill="none" stroke="#a0a0a0" stroke-width="1.7"/></svg>
<svg style="left:1186px;top:533px" width="16" height="16" viewBox="0 0 16 16"><path d="M2.3 2.5 V7.5" stroke="#3a3a4a" stroke-width="1.1"/><ellipse cx="6.1" cy="5.0" rx="1.15" ry="2.1" fill="none" stroke="#3a3a4a" stroke-width="1"/><path d="M9.9 2.5 V7.5" stroke="#3a3a4a" stroke-width="1.1"/><ellipse cx="13.7" cy="5.0" rx="1.15" ry="2.1" fill="none" stroke="#3a3a4a" stroke-width="1"/><ellipse cx="2.3" cy="11.5" rx="1.15" ry="2.1" fill="none" stroke="#3a3a4a" stroke-width="1"/><path d="M6.1 9 V14" stroke="#3a3a4a" stroke-width="1.1"/><ellipse cx="9.9" cy="11.5" rx="1.15" ry="2.1" fill="none" stroke="#3a3a4a" stroke-width="1"/><path d="M13.7 9 V14" stroke="#3a3a4a" stroke-width="1.1"/></svg>
<div class="t" style="left:1206.3px;top:534.20px;font-size:13px;color:#000;font-weight:normal;transform:scaleX(0.8866);transform-origin:0 0;">HSRAM1ECCCFG</div>
<div class="t" style="left:1400.3px;top:534.20px;font-size:13px;color:#d8263a;font-weight:normal;transform:scaleX(1.0232);transform-origin:0 0;">Error: unable to read</div>
<div class="t" style="left:1589.7px;top:534.20px;font-size:13px;color:#000;font-weight:normal;transform:scaleX(1.0416);transform-origin:0 0;">Memory Mapped</div>
<div class="a" style="left:1394px;top:107px;width:1px;height:445px;background:#e8e8e8;"></div>
<div class="a" style="left:1583px;top:107px;width:1px;height:445px;background:#e8e8e8;"></div>
<div class="a" style="left:1901px;top:108px;width:16px;height:448px;background:#f0f0f0;"></div>
<svg style="left:1904px;top:114px" width="10" height="6" viewBox="0 0 10 6"><path d="M1.2 5 L4.5 1.6 L7.8 5" fill="none" stroke="#555" stroke-width="2"/></svg>
<svg style="left:1904px;top:544px" width="10" height="6" viewBox="0 0 10 6"><path d="M1.2 1 L4.5 4.4 L7.8 1" fill="none" stroke="#555" stroke-width="2"/></svg>
<div class="a" style="left:1901px;top:270px;width:15px;height:39px;background:#cdcdcd;"></div>
<div class="a" style="left:1133px;top:556px;width:784px;height:15px;background:#f0f0f0;"></div>
<svg style="left:1139px;top:559px" width="6" height="10" viewBox="0 0 6 10"><path d="M5 1.2 L1.6 4.5 L5 7.8" fill="none" stroke="#555" stroke-width="2"/></svg>
<svg style="left:1889px;top:559px" width="6" height="10" viewBox="0 0 6 10"><path d="M1 1.2 L4.4 4.5 L1 7.8" fill="none" stroke="#555" stroke-width="2"/></svg>
<div class="a" style="left:1151px;top:556px;width:719px;height:15px;background:#cdcdcd;"></div>
<div class="a" style="left:484px;top:578px;width:667px;height:433px;background:#fff;border:1px solid #e2e2e2;border-radius:4px 4px 0 0;border-bottom:none"></div>
<div class="a" style="left:485px;top:579px;width:665px;height:24px;background:linear-gradient(#f8f8f8,#f0f0f0);border-radius:3px 3px 0 0"></div>
<div class="a" style="left:485px;top:603px;width:665px;height:1px;background:#e6e6e6;"></div>
<div class="a" style="left:784px;top:578px;width:221px;height:26px;background:#fff;border:1px solid #e2e2e2;border-bottom:none;border-radius:4px 4px 0 0"></div>
<svg style="left:490px;top:583px" width="16" height="16" viewBox="0 0 16 16"><path d="M2.5 0.5 H10 L13.5 4 V15.5 H2.5Z" fill="#fff" stroke="#909090"/><path d="M4 4 H9 M6.5 4 V10 H10 V13" stroke="#111" stroke-width="1.6" fill="none"/><rect x="8" y="9" width="7" height="7" fill="#cde" stroke="#345"/><path d="M9.5 10.5 L13.5 14.5" stroke="#123"/></svg>
<div class="t" style="left:508.7px;top:585.20px;font-size:13px;color:#000;font-weight:normal;transform:scaleX(0.9996);transform-origin:0 0;">iwr1443TargetConfigurati...</div>
<svg style="left:702px;top:583px" width="16" height="16" viewBox="0 0 16 16"><path d="M2.5 0.5 H10 L13.5 4 V15.5 H2.5Z" fill="#fff" stroke="#8090a8"/><text x="4" y="12.5" font-size="8.5" font-family="Liberation Sans" font-weight="bold" fill="#2a5aa8">.c</text></svg>
<div class="t" style="left:720.8px;top:585.20px;font-size:13px;color:#000;font-weight:normal;transform:scaleX(0.9454);transform-origin:0 0;">main.c</div>
<svg style="left:788px;top:583px" width="16" height="16" viewBox="0 0 16 16"><rect x="0.5" y="1.5" width="15" height="13" fill="#fff" stroke="#7a8aa8"/><path d="M0.5 2.5 H15.5" stroke="#3a78c8" stroke-width="2"/><text x="4" y="12.5" font-size="9" font-family="Liberation Sans" font-weight="bold" fill="#2a5aa8">c</text></svg>
<div class="t" style="left:807.7px;top:585.20px;font-size:13px;color:#000;font-weight:normal;transform:scaleX(0.9915);transform-origin:0 0;">DMA_open(unsigned int, str...</div>
<svg style="left:987px;top:586px" width="11" height="11" viewBox="0 0 11 11"><path d="M0.5 2.2 L2.2 0.5 L5.5 3.8 L8.8 0.5 L10.5 2.2 L7.2 5.5 L10.5 8.8 L8.8 10.5 L5.5 7.2 L2.2 10.5 L0.5 8.8 L3.8 5.5Z" fill="#fff" stroke="#6a6a6a" stroke-width="0.9" stroke-linejoin="round"/></svg>
<svg style="left:1008px;top:583px" width="16" height="16" viewBox="0 0 16 16"><path d="M3.5 2.5 H10 L13.5 6 V15.5 H3.5Z" fill="#fff" stroke="#8090a8"/><text x="5" y="14" font-size="8.5" font-family="Liberation Sans" font-weight="bold" fill="#2a5aa8">.c</text><path d="M0.5 1 H4 L5 2 H8 V6 H0.5Z" fill="#f5d070" stroke="#b08a30" stroke-width="0.8"/></svg>
<div class="t" style="left:1028.4px;top:585.20px;font-size:13px;color:#000;font-weight:normal;transform:scaleX(0.8985);transform-origin:0 0;">s_cos.c</div>
<svg style="left:1106px;top:586px" width="10" height="4" viewBox="0 0 10 4"><rect x="0.5" y="0.5" width="9" height="3" fill="none" stroke="#555" stroke-width="1"/></svg>
<svg style="left:1129px;top:586px" width="11" height="10" viewBox="0 0 11 10"><rect x="0.5" y="0.5" width="9.5" height="9" fill="none" stroke="#555" stroke-width="1"/><path d="M0.5 2 H10" stroke="#555" stroke-width="1.2"/></svg>
<div class="t" style="left:493.3px;top:611.50px;font-size:13px;color:#000;font-weight:normal;transform:scaleX(1.0349);transform-origin:0 0;">Can't find a source file at "/home/gtbldadm/nightlybuilds/mmwave_sdk/ti/drivers/dma/src/dma.c"</div>
<div class="t" style="left:493.1px;top:628.20px;font-size:13px;color:#000;font-weight:normal;transform:scaleX(1.0291);transform-origin:0 0;">Locate the file or edit the source lookup path to include its location.</div>
<div class="a" style="left:492px;top:655px;width:122px;height:25px;background:#e1e1e1;border:1px solid #adadad"></div>
<div class="t" style="left:497.5px;top:660.20px;font-size:13px;color:#000;font-weight:normal;transform:scaleX(0.9660);transform-origin:0 0;">View Disassembly...</div>
<div class="a" style="left:492px;top:692px;width:80px;height:25px;background:#e1e1e1;border:1px solid #adadad"></div>
<div class="t" style="left:497.5px;top:697.20px;font-size:13px;color:#000;font-weight:normal;transform:scaleX(0.9298);transform-origin:0 0;">Locate File...</div>
<div class="t" style="left:493.3px;top:771.50px;font-size:13px;color:#000;font-weight:normal;transform:scaleX(1.0087);transform-origin:0 0;">Configure when this editor is shown</div>
<div class="a" style="left:710px;top:766px;width:87px;height:25px;background:#e1e1e1;border:1px solid #adadad"></div>
<div class="t" style="left:715.3px;top:771.20px;font-size:13px;color:#000;font-weight:normal;transform:scaleX(0.9391);transform-origin:0 0;">Preferences...</div>
<div class="a" style="left:1156px;top:578px;width:762px;height:215px;background:#fff;border:1px solid #e2e2e2;border-radius:4px 4px 0 0;border-bottom:none"></div>
<div class="a" style="left:1157px;top:579px;width:760px;height:24px;background:linear-gradient(#e9edf8,#e2e8f4);border-radius:3px 3px 0 0"></div>
<div class="a" style="left:1157px;top:603px;width:760px;height:1px;background:#e6e6e6;"></div>
<div class="a" style="left:1259px;top:578px;width:150px;height:26px;background:#fff;border:1px solid #e2e2e2;border-bottom:none;border-radius:4px 4px 0 0"></div>
<svg style="left:1161px;top:583px" width="16" height="16" viewBox="0 0 16 16"><path d="M0 3 H4 M5 3 H8 M9 3 H11 M13 3 H15 M0 7 H3 M4 7 H8 M9 7 H12 M14 7 H15 M0 11.5 H12" stroke="#2f4fa0" stroke-width="1.8"/></svg>
<div class="t" style="left:1181px;top:585.20px;font-size:13px;color:#000;font-weight:normal;transform:scaleX(0.9704);transform-origin:0 0;">Disassembly</div>
<svg style="left:1263px;top:583px" width="16" height="16" viewBox="0 0 16 16"><rect x="4" y="1.5" width="8" height="13" rx="4" fill="#8ab0e0" stroke="#2f5fa8"/><ellipse cx="8" cy="3.5" rx="3.5" ry="1.8" fill="#d0e0f8" stroke="#2f5fa8" stroke-width="0.6"/></svg>
<div class="t" style="left:1283px;top:585.20px;font-size:13px;color:#000;font-weight:normal;transform:scaleX(1.0179);transform-origin:0 0;">Memory Browser</div>
<svg style="left:1391px;top:586px" width="11" height="11" viewBox="0 0 11 11"><path d="M0.5 2.2 L2.2 0.5 L5.5 3.8 L8.8 0.5 L10.5 2.2 L7.2 5.5 L10.5 8.8 L8.8 10.5 L5.5 7.2 L2.2 10.5 L0.5 8.8 L3.8 5.5Z" fill="#fff" stroke="#6a6a6a" stroke-width="0.9" stroke-linejoin="round"/></svg>
<svg style="left:1624px;top:583px" width="16" height="16" viewBox="0 0 16 16"><rect x="3" y="3" width="10" height="10" fill="#3aa04a" stroke="#1a5a2a"/><path d="M1 5 H3 M1 8 H3 M1 11 H3 M13 5 H15 M13 8 H15 M13 11 H15 M5 1 V3 M8 1 V3 M11 1 V3 M5 13 V15 M8 13 V15 M11 13 V15" stroke="#333" stroke-width="0.9"/><path d="M5.5 10.5 L10.5 5.5 M7 5.5 H10.5 V9" fill="none" stroke="#fff" stroke-width="1.6"/></svg>
<svg style="left:1646px;top:588px" width="9" height="5" viewBox="0 0 9 5"><path d="M0 0 H9 L4.5 5Z" fill="#222"/></svg>
<svg style="left:1664px;top:583px" width="16" height="16" viewBox="0 0 16 16"><path d="M1.5 0.5 H8 L12.5 5 V15.5 H1.5Z" fill="#fff" stroke="#707070"/><rect x="3.5" y="7" width="7" height="5" fill="#8a8a8a"/><path d="M4 6 V13 M6 6 V13 M8 6 V13 M10 6 V13" stroke="#8a8a8a" stroke-width="0.8"/></svg>
<svg style="left:1686px;top:588px" width="9" height="5" viewBox="0 0 9 5"><path d="M0 0 H9 L4.5 5Z" fill="#8a8a8a"/></svg>
<svg style="left:1704px;top:583px" width="16" height="16" viewBox="0 0 16 16"><path d="M1 9 L10 4 L15 8 L6 13Z" fill="#707070" stroke="#404040" stroke-width="0.7"/><path d="M2 10.5 L1.5 12 M4 11.8 L3.5 13.5 M6 13 L5.5 14.5 M9 4.5 L8.5 3 M11 5.5 L10.5 4 M13 6.5 L12.5 5" stroke="#555" stroke-width="0.9"/></svg>
<svg style="left:1727px;top:588px" width="9" height="5" viewBox="0 0 9 5"><path d="M0 0 H9 L4.5 5Z" fill="#8a8a8a"/></svg>
<svg style="left:1743px;top:583px" width="16" height="16" viewBox="0 0 16 16"><path d="M3 1.5 H6 V10 H8 L4.5 15 L1 10 H3Z" fill="#f8d870" stroke="#c09030" stroke-width="0.9"/><path d="M9 14.5 H12 V6 H14.5 L10.5 1 L6.5 6 H9Z" fill="#fbe08a" stroke="#c09030" stroke-width="0.9"/></svg>
<svg style="left:1766px;top:583px" width="16" height="16" viewBox="0 0 16 16"><path d="M2 9 C1 4 6 1 10 3 M13 7 C15 12 10 15 6 13" fill="none" stroke="#d8b030" stroke-width="2.4"/><path d="M8 0.5 L12.5 3 L8.5 6.5Z" fill="#f0d040" stroke="#a88820" stroke-width="0.6"/><path d="M8 15.5 L3.5 13 L7.5 9.5Z" fill="#f0d040" stroke="#a88820" stroke-width="0.6"/></svg>
<div class="a" style="left:1788px;top:582px;width:1px;height:18px;background:#8a8a8a;"></div>
<svg style="left:1797px;top:583px" width="16" height="16" viewBox="0 0 16 16"><rect x="1.5" y="3.5" width="13" height="11.5" fill="#f4f8fc" stroke="#8a8a8a"/><path d="M1.5 4.5 H8" stroke="#3a78c8" stroke-width="2"/><path d="M11.5 1 L14.5 4.5 H12.5 V8 H10.5 V4.5 H8.5Z" fill="#fbe7a0" stroke="#c8a040" stroke-width="0.8"/></svg>
<svg style="left:1821px;top:583px" width="16" height="16" viewBox="0 0 16 16"><rect x="1.5" y="5.5" width="12" height="9.5" fill="#eef4fb" stroke="#8a8a8a"/><path d="M1.5 6.5 H8" stroke="#3a78c8" stroke-width="2"/><path d="M6 11 L10 7" stroke="#2a3a6a" stroke-width="1.2"/><path d="M9 5 L12.5 1.5 L15 4 L11.5 7.5Z" fill="#a8a8a8" stroke="#707070" stroke-width="0.8"/></svg>
<svg style="left:1852px;top:586px" width="10" height="6" viewBox="0 0 10 6"><path d="M0.5 0.5 H9.5 L5 5.5Z" fill="none" stroke="#555" stroke-width="1"/></svg>
<svg style="left:1872px;top:587px" width="10" height="4" viewBox="0 0 10 4"><rect x="0.5" y="0.5" width="9" height="3" fill="none" stroke="#555" stroke-width="1"/></svg>
<svg style="left:1895px;top:586px" width="11" height="10" viewBox="0 0 11 10"><rect x="0.5" y="0.5" width="9.5" height="9" fill="none" stroke="#555" stroke-width="1"/><path d="M0.5 2 H10" stroke="#555" stroke-width="1.2"/></svg>
<div class="a" style="left:1170px;top:605px;width:694px;height:23px;background:#fff;border:1px solid #0078d7"></div>
<div class="a" style="left:1174px;top:608.5px;width:70px;height:16px;background:#0078d7;"></div>
<div class="t" style="left:1174px;top:609.20px;font-size:13px;color:#fff;font-weight:normal;transform:scaleX(0.9725);transform-origin:0 0;">0x00010788</div>
<div class="a" style="left:1865px;top:606px;width:20px;height:20px;background:#e1e1e1;border:1px solid #adadad"></div>
<svg style="left:1867px;top:608px" width="16" height="16" viewBox="0 0 16 16"><rect x="6.5" y="1.5" width="6" height="8" fill="#f8f8f8" stroke="#9a9a9a"/><rect x="2.5" y="5.5" width="6" height="8" fill="#f8f8f8" stroke="#9a9a9a"/><path d="M4 10 H7 V13" stroke="#5a7ab0" fill="none"/></svg>
<div class="a" style="left:1159px;top:628px;width:757px;height:163px;background:#fff;border:1px solid #b4b4b4;border-radius:4px 4px 0 0"></div>
<div class="a" style="left:1160px;top:629px;width:340px;height:20px;background:linear-gradient(#f2f4f8,#ccd6e4);border-right:1px solid #b4b4b4"></div>
<div class="a" style="left:1160px;top:649px;width:755px;height:1px;background:#a0a0a0;"></div>
<div class="t" style="left:1162.3px;top:632.20px;font-size:13px;color:#000;font-weight:normal;transform:scaleX(1.0009);transform-origin:0 0;">0xfae0 - 0x00010788(-0xca8) &lt;Memory Rendering 5&gt;</div>
<svg style="left:1482px;top:634px" width="11" height="11" viewBox="0 0 11 11"><path d="M0.5 2.2 L2.2 0.5 L5.5 3.8 L8.8 0.5 L10.5 2.2 L7.2 5.5 L10.5 8.8 L8.8 10.5 L5.5 7.2 L2.2 10.5 L0.5 8.8 L3.8 5.5Z" fill="#fff" stroke="#6a6a6a" stroke-width="0.9" stroke-linejoin="round"/></svg>
<div class="a" style="left:1163.5px;top:652.5px;width:165px;height:24px;background:#e5e5e5;border:1px solid #acacac"></div>
<div class="t" style="left:1167.4px;top:657.20px;font-size:13px;color:#000;font-weight:normal;transform:scaleX(0.9839);transform-origin:0 0;">32-Bit Hex - TI Style</div>
<svg style="left:1315px;top:661px" width="10" height="6" viewBox="0 0 10 6"><path d="M1 1 L5 5 L9 1" fill="none" stroke="#444" stroke-width="1.2"/></svg>
<div class="m" style="left:1166.9px;top:680.20px;color:#000;font-size:11.65px;">0x0000FAE0</div>
<div class="m" style="left:1253.5px;top:680.20px;color:#000;font-size:11.65px;">FF4AF7F0</div>
<div class="m" style="left:1313.5px;top:680.20px;color:#000;font-size:11.65px;">6B226AA1</div>
<div class="m" style="left:1373.5px;top:680.20px;color:#000;font-size:11.65px;">442A4281</div>
<div class="m" style="left:1433.5px;top:680.20px;color:#000;font-size:11.65px;">D0056322</div>
<div class="m" style="left:1493.5px;top:680.20px;color:#000;font-size:11.65px;">20FBF240</div>
<div class="m" style="left:1553.5px;top:680.20px;color:#000;font-size:11.65px;">FE9AF003</div>
<div class="m" style="left:1613.5px;top:680.20px;color:#000;font-size:11.65px;">6AA16B22</div>
<div class="m" style="left:1673.5px;top:680.20px;color:#000;font-size:11.65px;">0003F025</div>
<div class="m" style="left:1733.5px;top:680.20px;color:#000;font-size:11.65px;">62A01840</div>
<div class="m" style="left:1793.5px;top:680.20px;color:#000;font-size:11.65px;">18286920</div>
<div class="m" style="left:1166.9px;top:695.20px;color:#000;font-size:11.65px;">0x0000FB08</div>
<div class="m" style="left:1253.5px;top:695.20px;color:#000;font-size:11.65px;">6AE36120</div>
<div class="m" style="left:1313.5px;top:695.20px;color:#000;font-size:11.65px;">2500E000</div>
<div class="m" style="left:1373.5px;top:695.20px;color:#000;font-size:11.65px;">D105429A</div>
<div class="m" style="left:1433.5px;top:695.20px;color:#000;font-size:11.65px;">300C4804</div>
<div class="m" style="left:1493.5px;top:695.20px;color:#000;font-size:11.65px;">47806800</div>
<div class="m" style="left:1553.5px;top:695.20px;color:#000;font-size:11.65px;">4635B900</div>
<div class="m" style="left:1613.5px;top:695.20px;color:#000;font-size:11.65px;">BD704628</div>
<div class="m" style="left:1673.5px;top:695.20px;color:#000;font-size:11.65px;">080027B8</div>
<div class="m" style="left:1733.5px;top:695.20px;color:#000;font-size:11.65px;">08006BE8</div>
<div class="m" style="left:1793.5px;top:695.20px;color:#000;font-size:11.65px;">4D17B53E</div>
<div class="m" style="left:1166.9px;top:710.20px;color:#000;font-size:11.65px;">0x0000FB30</div>
<div class="m" style="left:1253.5px;top:710.20px;color:#000;font-size:11.65px;">0C406828</div>
<div class="m" style="left:1313.5px;top:710.20px;color:#000;font-size:11.65px;">4C17D317</div>
<div class="m" style="left:1373.5px;top:710.20px;color:#000;font-size:11.65px;">1310F8D4</div>
<div class="m" style="left:1433.5px;top:710.20px;color:#000;font-size:11.65px;">47884814</div>
<div class="m" style="left:1493.5px;top:710.20px;color:#000;font-size:11.65px;">21114628</div>
<div class="m" style="left:1553.5px;top:710.20px;color:#000;font-size:11.65px;">4AB0F8D4</div>
<div class="m" style="left:1613.5px;top:710.20px;color:#000;font-size:11.65px;">23002210</div>
<div class="m" style="left:1673.5px;top:710.20px;color:#000;font-size:11.65px;">210047A0</div>
<div class="m" style="left:1733.5px;top:710.20px;color:#000;font-size:11.65px;">460B9100</div>
<div class="m" style="left:1793.5px;top:710.20px;color:#000;font-size:11.65px;">91014604</div>
<div class="m" style="left:1166.9px;top:725.20px;color:#000;font-size:11.65px;">0x0000FB58</div>
<div class="m" style="left:1253.5px;top:725.20px;color:#000;font-size:11.65px;">30FFF04F</div>
<div class="m" style="left:1313.5px;top:725.20px;color:#000;font-size:11.65px;">F003461A</div>
<div class="m" style="left:1373.5px;top:725.20px;color:#000;font-size:11.65px;">B14CFE5D</div>
<div class="m" style="left:1433.5px;top:725.20px;color:#000;font-size:11.65px;">2100BD3E</div>
<div class="m" style="left:1493.5px;top:725.20px;color:#000;font-size:11.65px;">F04F9100</div>
<div class="m" style="left:1553.5px;top:725.20px;color:#000;font-size:11.65px;">910130FF</div>
<div class="m" style="left:1613.5px;top:725.20px;color:#000;font-size:11.65px;">461A460B</div>
<div class="m" style="left:1673.5px;top:725.20px;color:#000;font-size:11.65px;">FE52F003</div>
<div class="m" style="left:1733.5px;top:725.20px;color:#000;font-size:11.65px;">91002100</div>
<div class="m" style="left:1793.5px;top:725.20px;color:#000;font-size:11.65px;">30FFF04F</div>
<div class="m" style="left:1166.9px;top:740.20px;color:#000;font-size:11.65px;">0x0000FB80</div>
<div class="m" style="left:1253.5px;top:740.20px;color:#000;font-size:11.65px;">460B9101</div>
<div class="m" style="left:1313.5px;top:740.20px;color:#000;font-size:11.65px;">F003461A</div>
<div class="m" style="left:1373.5px;top:740.20px;color:#000;font-size:11.65px;">BD3EFE49</div>
<div class="m" style="left:1433.5px;top:740.20px;color:#000;font-size:11.65px;">FFFFE1F0</div>
<div class="m" style="left:1493.5px;top:740.20px;color:#000;font-size:11.65px;">F0608000</div>
<div class="m" style="left:1553.5px;top:740.20px;color:#000;font-size:11.65px;">080061A8</div>
<div class="m" style="left:1613.5px;top:740.20px;color:#000;font-size:11.65px;">41F0E92D</div>
<div class="m" style="left:1673.5px;top:740.20px;color:#000;font-size:11.65px;">3D0C4D17</div>
<div class="m" style="left:1733.5px;top:740.20px;color:#000;font-size:11.65px;">4680682A</div>
<div class="m" style="left:1793.5px;top:740.20px;color:#000;font-size:11.65px;">460F2A01</div>
<div class="m" style="left:1166.9px;top:755.20px;color:#000;font-size:11.65px;">0x0000FBA8</div>
<div class="m" style="left:1253.5px;top:755.20px;color:#000;font-size:11.65px;">480FD116</div>
<div class="m" style="left:1313.5px;top:755.20px;color:#000;font-size:11.65px;">24004E14</div>
<div class="m" style="left:1373.5px;top:755.20px;color:#000;font-size:11.65px;">F8D66004</div>
<div class="m" style="left:1433.5px;top:755.20px;color:#000;font-size:11.65px;">47800A20</div>
<div class="m" style="left:1493.5px;top:755.20px;color:#000;font-size:11.65px;">0A68F8D6</div>
<div class="m" style="left:1553.5px;top:755.20px;color:#000;font-size:11.65px;">F8D64780</div>
<div class="m" style="left:1613.5px;top:755.20px;color:#000;font-size:11.65px;">47800A70</div>
<div class="m" style="left:1673.5px;top:755.20px;color:#000;font-size:11.65px;">4E0A4809</div>
<div class="m" style="left:1733.5px;top:755.20px;color:#000;font-size:11.65px;">602C4A0A</div>
<div class="m" style="left:1793.5px;top:755.20px;color:#000;font-size:11.65px;">46217004</div>
<div class="m" style="left:1166.9px;top:770.20px;color:#000;font-size:11.65px;">0x0000FBD0</div>
<div class="m" style="left:1253.5px;top:770.20px;color:#000;font-size:11.65px;">46207034</div>
<div class="m" style="left:1313.5px;top:770.20px;color:#000;font-size:11.65px;">0003E882</div>
<div class="m" style="left:1373.5px;top:770.20px;color:#000;font-size:11.65px;">68004807</div>
<div class="m" style="left:1433.5px;top:770.20px;color:#000;font-size:11.65px;">46024639</div>
<div class="m" style="left:1493.5px;top:770.20px;color:#000;font-size:11.65px;">47904640</div>
<div class="m" style="left:1553.5px;top:770.20px;color:#000;font-size:11.65px;">81F0E8BD</div>
<div class="m" style="left:1613.5px;top:770.20px;color:#000;font-size:11.65px;">08006184</div>
<div class="m" style="left:1673.5px;top:770.20px;color:#000;font-size:11.65px;">080046A9</div>
<div class="m" style="left:1733.5px;top:770.20px;color:#000;font-size:11.65px;">08006136</div>
<div class="m" style="left:1793.5px;top:770.20px;color:#000;font-size:11.65px;">08003680</div>
<div class="a" style="left:1897px;top:680px;width:15px;height:108px;background:#f0f0f0;"></div>
<svg style="left:1900px;top:685px" width="10" height="6" viewBox="0 0 10 6"><path d="M1.2 5 L4.5 1.6 L7.8 5" fill="none" stroke="#555" stroke-width="2"/></svg>
<svg style="left:1900px;top:777px" width="10" height="6" viewBox="0 0 10 6"><path d="M1.2 1 L4.5 4.4 L7.8 1" fill="none" stroke="#555" stroke-width="2"/></svg>
<div class="a" style="left:1897px;top:726px;width:15px;height:17px;background:#cdcdcd;"></div>
<div class="a" style="left:1156px;top:797px;width:762px;height:214px;background:#fff;border:1px solid #e2e2e2;border-radius:4px 4px 0 0;border-bottom:none"></div>
<div class="a" style="left:1157px;top:798px;width:760px;height:24px;background:linear-gradient(#f8f8f8,#f0f0f0);border-radius:3px 3px 0 0"></div>
<div class="a" style="left:1157px;top:822px;width:760px;height:1px;background:#e6e6e6;"></div>
<div class="a" style="left:1156px;top:797px;width:96px;height:26px;background:#fff;border:1px solid #e2e2e2;border-bottom:none;border-radius:4px 4px 0 0"></div>
<svg style="left:1161px;top:802px" width="16" height="16" viewBox="0 0 16 16"><rect x="1.5" y="1.5" width="12" height="9" rx="1.5" fill="#e8f0fb" stroke="#2f5fa8" stroke-width="1.6"/><path d="M4 4.5 H10 M4 7 H8" stroke="#2f5fa8" stroke-width="1.2"/><rect x="2.5" y="12" width="10" height="2" fill="#2f5fa8"/></svg>
<div class="t" style="left:1180.5px;top:804.20px;font-size:13px;color:#000;font-weight:normal;transform:scaleX(0.9749);transform-origin:0 0;">Console</div>
<svg style="left:1235px;top:805px" width="11" height="11" viewBox="0 0 11 11"><path d="M0.5 2.2 L2.2 0.5 L5.5 3.8 L8.8 0.5 L10.5 2.2 L7.2 5.5 L10.5 8.8 L8.8 10.5 L5.5 7.2 L2.2 10.5 L0.5 8.8 L3.8 5.5Z" fill="#fff" stroke="#6a6a6a" stroke-width="0.9" stroke-linejoin="round"/></svg>
<svg style="left:1690px;top:802px" width="16" height="16" viewBox="0 0 16 16"><path d="M1.5 0.5 H9 L12.5 4 V14.5 H1.5Z" fill="#fff" stroke="#8a8a8a"/><path d="M3.5 4 H9 M3.5 6.5 H9 M3.5 9 H8" stroke="#5a7ab0" stroke-width="1"/><path d="M9 10 L15 15.5 M15 10 L9 15.5" stroke="#707070" stroke-width="1.8"/></svg>
<svg style="left:1712px;top:802px" width="16" height="16" viewBox="0 0 16 16"><rect x="7.5" y="0.5" width="8" height="15" fill="#fff" stroke="#7a8aa0"/><path d="M9.5 3 H13.5 M9.5 8 H13.5 M9.5 13 H13.5" stroke="#3a6ab0" stroke-width="1.4"/><path d="M2.5 9 V6.5 C2.5 4 6 4 6 6.5 V9" fill="none" stroke="#8a7a4a" stroke-width="1.2"/><rect x="1" y="9" width="6.5" height="6" fill="#e8c040" stroke="#9a7a20" stroke-width="0.8"/></svg>
<svg style="left:1735px;top:802px" width="16" height="16" viewBox="0 0 16 16"><path d="M1.5 0.5 H9 L12.5 4 V14.5 H1.5Z" fill="#fff" stroke="#a0a0a0"/><path d="M3.5 4 H9 M3.5 6.5 H9 M3.5 9 H6" stroke="#9ab0d0" stroke-width="1"/><path d="M9 8 H14 V13 H8 M10 11 L8 13 L10 15" fill="none" stroke="#d8b040" stroke-width="1.6"/></svg>
<div class="a" style="left:1757px;top:801px;width:1px;height:18px;background:#8a8a8a;"></div>
<svg style="left:1767px;top:802px" width="16" height="16" viewBox="0 0 16 16"><rect x="1.5" y="5.5" width="12" height="10" fill="#eef4fb" stroke="#8a8a8a"/><path d="M1.5 6.5 H13.5" stroke="#3a78c8" stroke-width="2"/><path d="M6 12 L10 8" stroke="#1a3a1a" stroke-width="1.2"/><circle cx="11.5" cy="4" r="3" fill="#3ab04a" stroke="#1a6a2a" stroke-width="0.8"/></svg>
<svg style="left:1790px;top:802px" width="16" height="16" viewBox="0 0 16 16"><rect x="1.5" y="1.5" width="12" height="9" rx="1.5" fill="#e8f0fb" stroke="#2f5fa8" stroke-width="1.6"/><path d="M4 4.5 H10 M4 7 H8" stroke="#2f5fa8" stroke-width="1.2"/><rect x="2.5" y="12" width="10" height="2" fill="#2f5fa8"/></svg>
<svg style="left:1813px;top:808px" width="9" height="5" viewBox="0 0 9 5"><path d="M0 0 H9 L4.5 5Z" fill="#222"/></svg>
<svg style="left:1830px;top:802px" width="16" height="16" viewBox="0 0 16 16"><rect x="1.5" y="3.5" width="12" height="11" fill="#fbf6e0" stroke="#8a8a6a"/><rect x="1.5" y="3.5" width="12" height="2.5" fill="#5d8fd8"/><path d="M13 0.5 L14.2 2.8 L16.5 3 L14.6 4.6 L15.2 7 L13 5.8 L10.8 7 L11.4 4.6 L9.5 3 L11.8 2.8Z" fill="#fde27a" stroke="#d9a21b" stroke-width="0.8"/></svg>
<svg style="left:1853px;top:808px" width="9" height="5" viewBox="0 0 9 5"><path d="M0 0 H9 L4.5 5Z" fill="#222"/></svg>
<svg style="left:1872px;top:805px" width="10" height="4" viewBox="0 0 10 4"><rect x="0.5" y="0.5" width="9" height="3" fill="none" stroke="#555" stroke-width="1"/></svg>
<svg style="left:1895px;top:805px" width="11" height="10" viewBox="0 0 11 10"><rect x="0.5" y="0.5" width="9.5" height="9" fill="none" stroke="#555" stroke-width="1"/><path d="M0.5 2 H10" stroke="#555" stroke-width="1.2"/></svg>
<div class="t" style="left:1158.3px;top:824.90px;font-size:13px;color:#000;font-weight:normal;transform:scaleX(0.9409);transform-origin:0 0;">level_sense_demo</div>
<div class="a" style="left:1157px;top:841px;width:760px;height:1px;background:#a0a0a0;"></div>
<div class="a" style="left:1157px;top:843px;width:743px;height:151px;overflow:hidden">
<div class="m" style="left:3.3px;top:1.40px;color:#dc2a32">Cortex_R4_0: File Loader: Verification failed: Target failed to write 0x00000000</div>
<div class="m" style="left:3.3px;top:16.40px;color:#dc2a32">Cortex_R4_0: GEL: File: C:\tiworkspace\level_sense_demo\Debug\level_sense_demo.xer4f: Load failed.</div>
<div class="m" style="left:3.3px;top:31.40px;color:#000">Cortex_R4_0: Breakpoint Manager: One or more breakpoints will not relocate to new symbolic locations until</div>
<div class="m" style="left:3.3px;top:46.40px;color:#dc2a32">Cortex_R4_0: Trouble Setting Breakpoint with the Action "Terminate Program Execution" at 0xce78: (Error -1</div>
<div class="m" style="left:3.3px;top:61.40px;color:#000">Cortex_R4_0: Breakpoint Manager: Retrying with a AET breakpoint</div>
<div class="m" style="left:3.3px;top:76.40px;color:#dc2a32">Cortex_R4_0: Trouble Setting Breakpoint with the Action "Continue or Finish Stepping" at 0x8: (Error -1065</div>
<div class="m" style="left:3.3px;top:91.40px;color:#000">Cortex_R4_0: Breakpoint Manager: Retrying with a AET breakpoint</div>
<div class="m" style="left:3.3px;top:106.40px;color:#dc2a32">Cortex_R4_0: Trouble Setting Breakpoint with the Action "Terminate GEL_Go()" at 0x10750: (Error -1065 @ 0x</div>
<div class="m" style="left:3.3px;top:121.40px;color:#000">Cortex_R4_0: Breakpoint Manager: Retrying with a AET breakpoint</div>
</div>
<div class="a" style="left:1900px;top:843px;width:15px;height:151px;background:#f0f0f0;"></div>
<svg style="left:1903px;top:848px" width="10" height="6" viewBox="0 0 10 6"><path d="M1.2 5 L4.5 1.6 L7.8 5" fill="none" stroke="#555" stroke-width="2"/></svg>
<svg style="left:1903px;top:982px" width="10" height="6" viewBox="0 0 10 6"><path d="M1.2 1 L4.5 4.4 L7.8 1" fill="none" stroke="#555" stroke-width="2"/></svg>
<div class="a" style="left:1900px;top:870px;width:15px;height:106px;background:#cdcdcd;"></div>
<div class="a" style="left:1157px;top:994px;width:743px;height:16px;background:#f0f0f0;"></div>
<svg style="left:1163px;top:997px" width="6" height="10" viewBox="0 0 6 10"><path d="M5 1.2 L1.6 4.5 L5 7.8" fill="none" stroke="#555" stroke-width="2"/></svg>
<svg style="left:1888px;top:997px" width="6" height="10" viewBox="0 0 6 10"><path d="M1 1.2 L4.4 4.5 L1 7.8" fill="none" stroke="#555" stroke-width="2"/></svg>
<div class="a" style="left:1175px;top:995px;width:213px;height:14px;background:#cdcdcd;"></div>
<div class="a" style="left:1900px;top:994px;width:15px;height:16px;background:#f0f0f0;"></div>
<div class="a" style="left:0px;top:1011px;width:1920px;height:28px;background:#e6e6e6;"></div>
<div class="a" style="left:1428px;top:1014px;width:30px;height:22px;background:transparent;border-right:1px solid #a0a0a0;border-bottom:1px solid #a0a0a0"></div>
<svg style="left:1432px;top:1016px" width="16" height="16" viewBox="0 0 16 16"><rect x="7.5" y="6.5" width="8" height="6" fill="#d8ecf8" stroke="#3a7ac0"/><path d="M9 14.5 H14" stroke="#3a7ac0" stroke-width="1.2"/><circle cx="5" cy="11" r="4.3" fill="#f4f4f4" stroke="#a0a0a0"/><circle cx="5" cy="11" r="1.2" fill="#c0c0c0"/><path d="M1.5 7 C1.5 3 5 1.5 8 3" fill="none" stroke="#e8b830" stroke-width="2"/><path d="M7 0.5 L10 3.5 L6.5 5Z" fill="#e8b830"/></svg>
<div class="a" style="left:1460px;top:1017px;width:2px;height:18px;background:repeating-linear-gradient(to bottom,#b0b0b0 0 2px,transparent 2px 4px)"></div>
<div class="a" style="left:1750px;top:1017px;width:2px;height:18px;background:repeating-linear-gradient(to bottom,#b0b0b0 0 2px,transparent 2px 4px)"></div>
<div class="t" style="left:1757.5px;top:1018.80px;font-size:13px;color:#000;font-weight:normal;transform:scaleX(0.9173);transform-origin:0 0;">ARM</div>
<div class="a" style="left:1793px;top:1014px;width:1px;height:25px;background:#c0c0c0;"></div>
<div class="t" style="left:1803.9px;top:1018.80px;font-size:13px;color:#000;font-weight:normal;transform:scaleX(0.7169);transform-origin:0 0;">LE</div>
<div class="a" style="left:1824px;top:1014px;width:1px;height:25px;background:#c0c0c0;"></div>
<div class="t" style="left:1834.6px;top:1018.80px;font-size:13px;color:#000;font-weight:normal;transform:scaleX(0.8662);transform-origin:0 0;">ABT</div>
<div class="a" style="left:1868px;top:1017px;width:2px;height:18px;background:repeating-linear-gradient(to bottom,#b0b0b0 0 2px,transparent 2px 4px)"></div>
<svg style="left:1876px;top:1019px" width="14" height="14" viewBox="0 0 14 14"><circle cx="7" cy="7" r="6" fill="#f0e040" stroke="#222" stroke-width="1.5"/><path d="M7 3 V7 L9 9" stroke="#222" stroke-width="1.3" fill="none"/></svg>
<div class="t" style="left:1896px;top:1018.80px;font-size:13px;color:#000;font-weight:normal;transform:scaleX(0.9409);transform-origin:0 0;">: 0</div>
<div class="a" style="left:0px;top:1039px;width:1920px;height:1px;background:#f2f2f2;"></div>
<div class="a" style="left:0px;top:1040px;width:1920px;height:8px;background:#111111;"></div>
<div class="a" style="left:0px;top:1040px;width:1920px;height:2px;background:#000;"></div>
<div class="a" style="left:244px;top:1043px;width:164px;height:5px;background:#ebebeb;"></div>
<div class="a" style="left:408px;top:1043px;width:56px;height:5px;background:#2a8af0;"></div>
<div class="a" style="left:812px;top:1040px;width:48px;height:8px;background:#353535;"></div>
<div class="a" style="left:1915px;top:1040px;width:1px;height:8px;background:#9a9a9a;"></div>
<div class="t" style="left:1815.8px;top:1044.20px;font-size:13px;color:#fff;font-weight:normal;">12:05</div>
<svg style="left:1816px;top:947px" width="68" height="68" viewBox="0 0 68 68"><defs><radialGradient id="gg" cx="50%" cy="45%" r="50%"><stop offset="0.55" stop-color="#ffffff"/><stop offset="1" stop-color="#dff5df"/></radialGradient></defs><circle cx="34" cy="34" r="33.5" fill="#fbfbfb" fill-opacity="0.85" stroke="#e6e6e6" stroke-width="1"/><circle cx="34" cy="34" r="28.5" fill="url(#gg)" fill-opacity="0.88" stroke="#36c050" stroke-width="1.3"/><path d="M34 2.8000000000000007 A31.2 31.2 0 0 1 64.40 26.98" fill="none" stroke="#4cd466" stroke-width="3.6"/></svg>
<div class="t" style="left:1832.5px;top:968.23px;font-size:22px;color:#4a4a4a;font-weight:normal;transform:scaleX(0.8990);transform-origin:0 0;">21</div>
<div class="t" style="left:1856px;top:971.20px;font-size:13px;color:#4a4a4a;font-weight:normal;transform:scaleX(0.9949);transform-origin:0 0;">%</div>
<svg style="left:1831px;top:989px" width="8" height="11" viewBox="0 0 8 11"><rect x="2" y="0.5" width="4" height="8" rx="2" fill="none" stroke="#36c050" stroke-width="1.1"/><circle cx="4" cy="8" r="2.8" fill="none" stroke="#36c050" stroke-width="1.1"/><path d="M4 4 V8" stroke="#36c050" stroke-width="1.3"/></svg>
<div class="t" style="left:1843px;top:988.53px;font-size:9px;color:#333;font-weight:normal;transform:scaleX(0.9796);transform-origin:0 0;">33°C</div></body></html>
